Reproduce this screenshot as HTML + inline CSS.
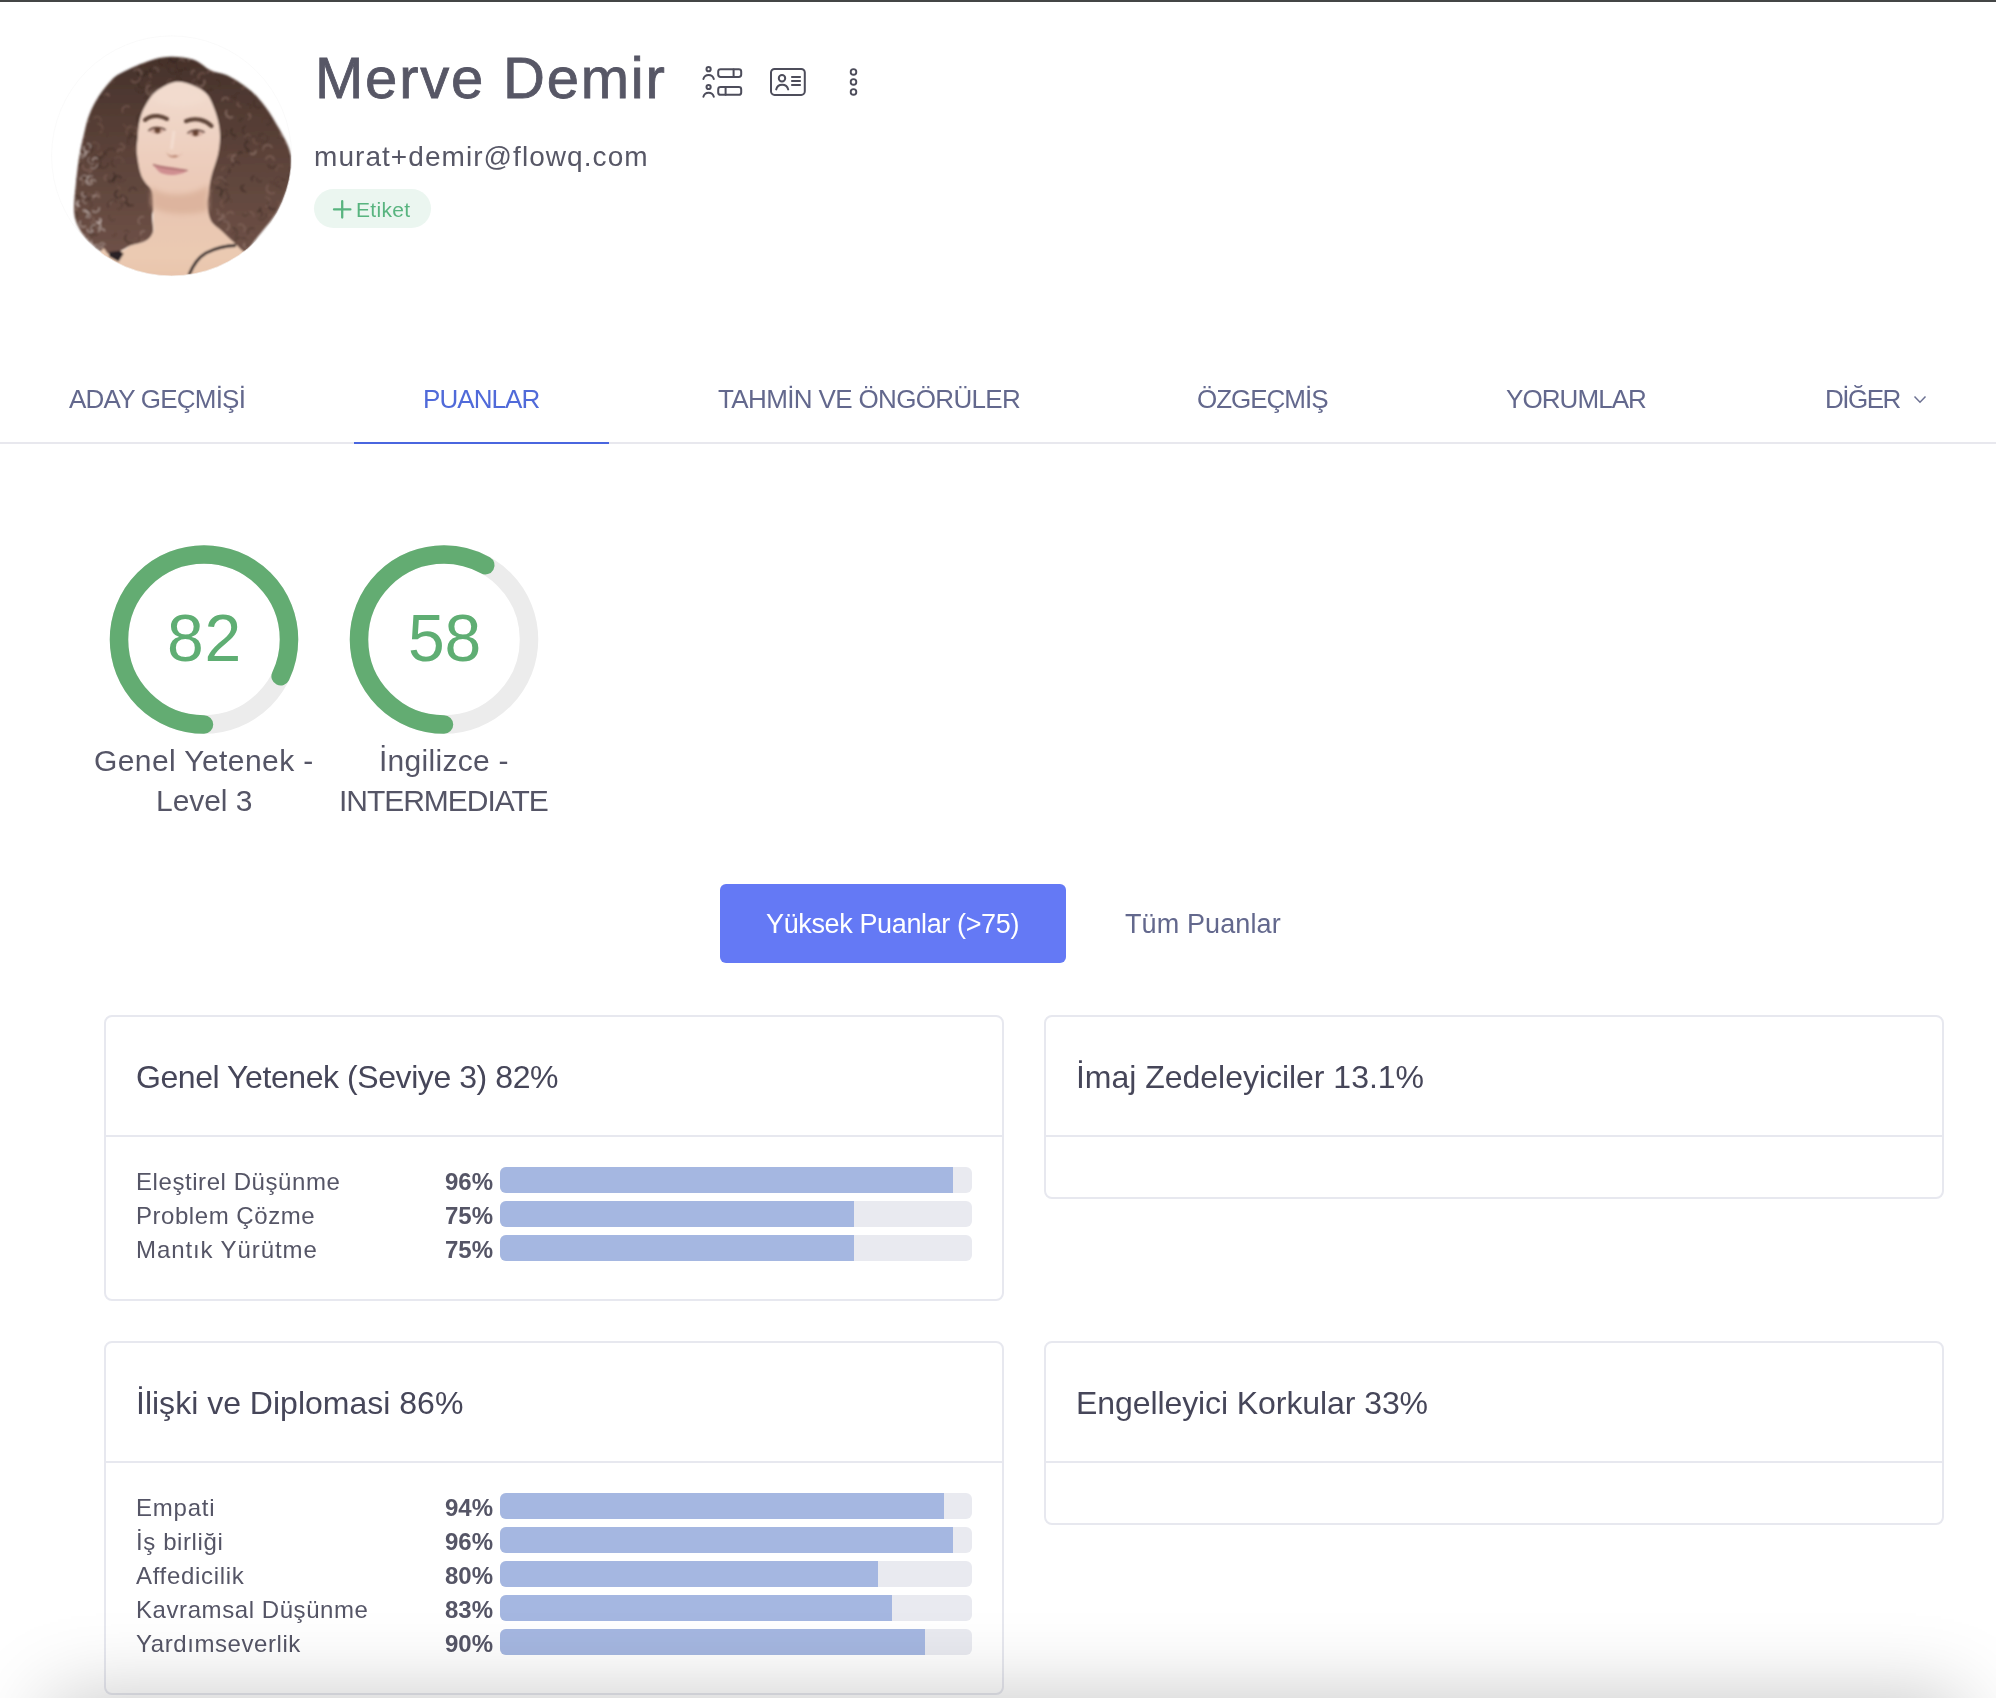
<!DOCTYPE html>
<html><head><meta charset="utf-8">
<style>
html,body{margin:0;padding:0;background:#fff;}
body{width:1996px;height:1698px;position:relative;overflow:hidden;font-family:"Liberation Sans",sans-serif;}
.a{position:absolute;white-space:nowrap;}
.t{line-height:1;will-change:transform;}
.topline{left:0;top:0;width:1996px;height:2px;background:#444646;}
.pill{left:314px;top:189px;width:117px;height:39px;border-radius:20px;background:#ebf6f0;}
.tabline{left:0;top:442px;width:1996px;height:2px;background:#e8e8ee;}
.tabul{left:354px;top:442px;width:255px;height:2px;background:#4a66df;}
.btn{left:720px;top:884px;width:346px;height:79px;border-radius:6px;background:#6479f5;}
.card{border:2px solid #e7e8ef;border-radius:8px;box-sizing:border-box;background:#fff;}
.cdiv{height:2px;background:#e7e8ef;}
.bar{width:472px;height:26px;border-radius:6px;background:#e9eaf0;overflow:hidden;}
.bar i{display:block;height:100%;background:#a5b7e1;}
.shade{left:50px;top:1698px;width:1912px;height:300px;box-shadow:0 0 78px rgba(0,0,0,0.23);background:#fff;}

</style></head><body>
<div class="a topline"></div>
<svg class="a" style="left:50px;top:35px" width="245" height="245" viewBox="0 0 245 245">
  <defs>
    <clipPath id="cc"><circle cx="121.6" cy="120.9" r="120.2"/></clipPath>
    <clipPath id="hairclip"><path d="M110.5 22.8 C121.9 20.7 133.7 22.2 142.0 24.3 C150.3 26.4 154.3 32.5 160.5 35.3 C166.7 38.1 172.2 37.8 179.0 41.2 C185.8 44.7 194.9 50.8 201.0 56.0 C207.1 61.2 211.0 66.0 215.7 72.2 C220.4 78.5 225.3 87.1 229.0 93.5 C232.7 99.9 235.7 105.2 237.8 110.5 C239.9 115.8 241.0 119.8 241.5 125.0 C242.0 130.2 241.7 136.7 240.8 142.0 C239.9 147.3 238.6 150.9 236.3 156.8 C234.0 162.7 231.5 170.0 226.8 177.4 C222.2 184.8 213.9 194.2 208.4 201.0 C202.9 207.8 197.7 216.5 194.0 218.0 C190.3 219.5 189.8 213.5 186.0 210.0 C182.2 206.5 175.8 201.0 171.5 197.0 C167.2 193.0 163.6 189.7 160.0 186.0 C156.4 182.3 155.0 177.7 150.0 175.0 C145.0 172.3 137.7 170.0 130.0 170.0 C122.3 170.0 108.5 170.4 104.0 175.0 C99.5 179.6 104.4 192.1 103.0 197.3 C101.6 202.5 99.4 203.8 95.7 206.0 C92.0 208.2 85.3 208.9 81.0 210.6 C76.7 212.3 73.8 214.6 70.0 216.0 C66.2 217.4 62.0 219.5 58.0 219.0 C54.0 218.5 50.3 216.5 46.0 213.0 C41.7 209.5 35.6 203.7 32.0 198.0 C28.4 192.3 25.3 187.1 24.3 179.0 C23.3 170.9 24.9 159.3 25.8 149.5 C26.7 139.7 28.1 128.3 29.5 120.0 C30.9 111.7 32.4 105.7 33.9 99.4 C35.4 93.2 36.3 88.0 38.3 82.5 C40.3 77.0 42.3 72.1 45.7 66.3 C49.1 60.5 54.2 52.8 58.9 47.9 C63.5 43.0 65.0 41.0 73.6 36.8 C82.2 32.6 99.1 24.9 110.5 22.8 Z"/></clipPath>
    <linearGradient id="hairg" x1="0" y1="0" x2="0" y2="1">
      <stop offset="0" stop-color="#46322b"/>
      <stop offset="0.45" stop-color="#5a4138"/>
      <stop offset="1" stop-color="#6e5147"/>
    </linearGradient>
    <linearGradient id="skin" x1="0" y1="0" x2="0" y2="1">
      <stop offset="0" stop-color="#f2dccf"/>
      <stop offset="0.4" stop-color="#ecccbb"/>
      <stop offset="0.62" stop-color="#e9c7b2"/>
      <stop offset="0.8" stop-color="#ebcab2"/>
      <stop offset="1" stop-color="#e6bfa5"/>
    </linearGradient>
    <radialGradient id="neckshade" cx="0.5" cy="0.3" r="0.6">
      <stop offset="0" stop-color="#c99a82" stop-opacity="0.55"/>
      <stop offset="1" stop-color="#c99a82" stop-opacity="0"/>
    </radialGradient>
    <filter id="blur1" x="-10%" y="-10%" width="120%" height="120%"><feGaussianBlur stdDeviation="0.9"/></filter>
    <filter id="blur2" x="-20%" y="-20%" width="140%" height="140%"><feGaussianBlur stdDeviation="2.5"/></filter>
  </defs>
  <g clip-path="url(#cc)">
    <rect width="245" height="245" fill="#ffffff"/>
    <g filter="url(#blur1)">
      <path fill="url(#hairg)" d="M110.5 22.8 C121.9 20.7 133.7 22.2 142.0 24.3 C150.3 26.4 154.3 32.5 160.5 35.3 C166.7 38.1 172.2 37.8 179.0 41.2 C185.8 44.7 194.9 50.8 201.0 56.0 C207.1 61.2 211.0 66.0 215.7 72.2 C220.4 78.5 225.3 87.1 229.0 93.5 C232.7 99.9 235.7 105.2 237.8 110.5 C239.9 115.8 241.0 119.8 241.5 125.0 C242.0 130.2 241.7 136.7 240.8 142.0 C239.9 147.3 238.6 150.9 236.3 156.8 C234.0 162.7 231.5 170.0 226.8 177.4 C222.2 184.8 213.9 194.2 208.4 201.0 C202.9 207.8 197.7 216.5 194.0 218.0 C190.3 219.5 189.8 213.5 186.0 210.0 C182.2 206.5 175.8 201.0 171.5 197.0 C167.2 193.0 163.6 189.7 160.0 186.0 C156.4 182.3 155.0 177.7 150.0 175.0 C145.0 172.3 137.7 170.0 130.0 170.0 C122.3 170.0 108.5 170.4 104.0 175.0 C99.5 179.6 104.4 192.1 103.0 197.3 C101.6 202.5 99.4 203.8 95.7 206.0 C92.0 208.2 85.3 208.9 81.0 210.6 C76.7 212.3 73.8 214.6 70.0 216.0 C66.2 217.4 62.0 219.5 58.0 219.0 C54.0 218.5 50.3 216.5 46.0 213.0 C41.7 209.5 35.6 203.7 32.0 198.0 C28.4 192.3 25.3 187.1 24.3 179.0 C23.3 170.9 24.9 159.3 25.8 149.5 C26.7 139.7 28.1 128.3 29.5 120.0 C30.9 111.7 32.4 105.7 33.9 99.4 C35.4 93.2 36.3 88.0 38.3 82.5 C40.3 77.0 42.3 72.1 45.7 66.3 C49.1 60.5 54.2 52.8 58.9 47.9 C63.5 43.0 65.0 41.0 73.6 36.8 C82.2 32.6 99.1 24.9 110.5 22.8 Z"/>
      <g clip-path="url(#hairclip)" fill="none"><path d="M123.3 129.3 A4.8 4.8 0 0 1 116.6 136.0" stroke="#8c6d62" stroke-width="1.3" opacity="0.6"/><path d="M65.0 184.3 A3.4 3.4 0 0 1 59.9 179.8" stroke="#553c33" stroke-width="1.6" opacity="0.6"/><path d="M83.7 35.8 A4.4 4.4 0 0 1 90.3 41.7" stroke="#9c8076" stroke-width="1.4" opacity="0.6"/><path d="M112.1 111.9 A4.2 4.2 0 0 1 104.0 110.0" stroke="#9c8076" stroke-width="1.0" opacity="0.6"/><path d="M137.7 29.5 A2.6 2.6 0 0 1 136.2 34.4" stroke="#432f28" stroke-width="1.4" opacity="0.6"/><path d="M89.9 139.4 A2.6 2.6 0 0 1 94.9 140.0" stroke="#432f28" stroke-width="1.4" opacity="0.6"/><path d="M168.6 110.0 A2.8 2.8 0 0 1 165.0 114.3" stroke="#553c33" stroke-width="1.8" opacity="0.6"/><path d="M174.7 82.7 A2.7 2.7 0 0 1 179.3 85.3" stroke="#7d5e52" stroke-width="0.8" opacity="0.6"/><path d="M45.6 39.4 A2.9 2.9 0 0 1 41.8 43.6" stroke="#3a2822" stroke-width="1.8" opacity="0.6"/><path d="M18.9 57.8 A4.7 4.7 0 0 1 20.1 67.1" stroke="#8c6d62" stroke-width="1.2" opacity="0.6"/><path d="M115.4 135.7 A2.6 2.6 0 0 1 111.4 132.5" stroke="#9c8076" stroke-width="1.1" opacity="0.6"/><path d="M92.7 210.6 A4.3 4.3 0 0 1 93.9 219.0" stroke="#3a2822" stroke-width="0.9" opacity="0.6"/><path d="M19.2 115.0 A3.5 3.5 0 0 1 25.9 113.7" stroke="#9c8076" stroke-width="1.4" opacity="0.6"/><path d="M60.4 169.3 A2.4 2.4 0 0 1 64.5 166.9" stroke="#9c8076" stroke-width="1.2" opacity="0.6"/><path d="M244.4 20.0 A4.6 4.6 0 0 1 235.3 19.0" stroke="#2f211d" stroke-width="1.4" opacity="0.6"/><path d="M28.4 60.8 A5.0 5.0 0 0 1 21.2 54.0" stroke="#553c33" stroke-width="1.4" opacity="0.6"/><path d="M241.0 60.6 A2.8 2.8 0 0 1 237.7 65.1" stroke="#2f211d" stroke-width="1.4" opacity="0.6"/><path d="M103.6 33.4 A2.6 2.6 0 0 1 107.4 37.1" stroke="#9c8076" stroke-width="1.0" opacity="0.6"/><path d="M105.7 115.2 A4.9 4.9 0 0 1 100.4 107.2" stroke="#8c6d62" stroke-width="1.6" opacity="0.6"/><path d="M105.7 149.6 A2.9 2.9 0 0 1 106.5 143.9" stroke="#432f28" stroke-width="1.6" opacity="0.6"/><path d="M58.5 172.5 A4.8 4.8 0 0 1 66.5 167.3" stroke="#432f28" stroke-width="1.5" opacity="0.6"/><path d="M129.2 35.4 A2.1 2.1 0 0 1 125.0 35.8" stroke="#3a2822" stroke-width="0.8" opacity="0.6"/><path d="M70.2 162.5 A2.8 2.8 0 0 1 75.6 162.9" stroke="#2f211d" stroke-width="1.7" opacity="0.6"/><path d="M130.9 205.9 A4.9 4.9 0 0 1 139.4 210.6" stroke="#432f28" stroke-width="1.0" opacity="0.6"/><path d="M211.8 145.3 A2.8 2.8 0 0 1 207.0 142.3" stroke="#432f28" stroke-width="1.5" opacity="0.6"/><path d="M109.4 69.4 A2.1 2.1 0 0 1 113.0 71.7" stroke="#7d5e52" stroke-width="1.2" opacity="0.6"/><path d="M47.5 88.8 A4.7 4.7 0 0 1 49.7 97.8" stroke="#7d5e52" stroke-width="1.5" opacity="0.6"/><path d="M148.4 50.0 A2.1 2.1 0 0 1 151.4 47.1" stroke="#3a2822" stroke-width="1.3" opacity="0.6"/><path d="M88.7 23.0 A3.8 3.8 0 0 1 88.7 30.5" stroke="#3a2822" stroke-width="1.3" opacity="0.6"/><path d="M92.9 222.5 A2.2 2.2 0 0 1 88.9 220.7" stroke="#553c33" stroke-width="1.2" opacity="0.6"/><path d="M226.9 166.7 A2.4 2.4 0 0 1 228.2 171.3" stroke="#7d5e52" stroke-width="1.2" opacity="0.6"/><path d="M216.7 196.0 A3.3 3.3 0 0 1 223.1 196.8" stroke="#2f211d" stroke-width="0.8" opacity="0.6"/><path d="M26.0 155.3 A3.1 3.1 0 0 1 21.0 151.6" stroke="#3a2822" stroke-width="1.4" opacity="0.6"/><path d="M166.2 218.8 A4.6 4.6 0 0 1 157.4 221.4" stroke="#9c8076" stroke-width="1.1" opacity="0.6"/><path d="M174.1 109.1 A3.4 3.4 0 0 1 173.2 115.7" stroke="#553c33" stroke-width="0.9" opacity="0.6"/><path d="M29.2 143.7 A3.4 3.4 0 0 1 24.7 138.6" stroke="#432f28" stroke-width="1.8" opacity="0.6"/><path d="M195.3 156.1 A3.5 3.5 0 0 1 191.8 150.2" stroke="#3a2822" stroke-width="1.2" opacity="0.6"/><path d="M151.8 126.2 A4.3 4.3 0 0 1 160.0 124.3" stroke="#7d5e52" stroke-width="1.5" opacity="0.6"/><path d="M219.3 82.3 A4.0 4.0 0 0 1 215.7 89.4" stroke="#432f28" stroke-width="1.4" opacity="0.6"/><path d="M186.5 62.9 A2.6 2.6 0 0 1 189.2 58.4" stroke="#432f28" stroke-width="1.4" opacity="0.6"/><path d="M54.4 122.1 A4.5 4.5 0 0 1 46.7 117.5" stroke="#2f211d" stroke-width="0.8" opacity="0.6"/><path d="M238.2 188.3 A2.3 2.3 0 0 1 237.7 183.7" stroke="#8c6d62" stroke-width="1.1" opacity="0.6"/><path d="M113.8 143.5 A3.5 3.5 0 0 1 109.3 148.7" stroke="#7d5e52" stroke-width="1.5" opacity="0.6"/><path d="M163.0 85.9 A4.5 4.5 0 0 1 154.8 82.5" stroke="#7d5e52" stroke-width="1.7" opacity="0.6"/><path d="M175.5 133.0 A2.9 2.9 0 0 1 178.5 137.9" stroke="#2f211d" stroke-width="1.4" opacity="0.6"/><path d="M112.7 61.7 A4.3 4.3 0 0 1 108.2 54.4" stroke="#7d5e52" stroke-width="1.0" opacity="0.6"/><path d="M28.3 144.5 A3.3 3.3 0 0 1 31.8 150.1" stroke="#9c8076" stroke-width="1.3" opacity="0.6"/><path d="M103.0 38.1 A2.6 2.6 0 0 1 101.4 33.2" stroke="#2f211d" stroke-width="1.3" opacity="0.6"/><path d="M23.1 111.3 A4.1 4.1 0 0 1 20.6 119.1" stroke="#432f28" stroke-width="1.0" opacity="0.6"/><path d="M141.8 208.4 A3.5 3.5 0 0 1 137.1 213.5" stroke="#2f211d" stroke-width="1.0" opacity="0.6"/><path d="M172.3 66.2 A3.2 3.2 0 0 1 178.6 65.1" stroke="#9c8076" stroke-width="1.2" opacity="0.6"/><path d="M65.2 197.8 A2.0 2.0 0 0 1 61.9 200.2" stroke="#553c33" stroke-width="1.4" opacity="0.6"/><path d="M199.6 212.7 A3.4 3.4 0 0 1 194.7 208.1" stroke="#9c8076" stroke-width="1.8" opacity="0.6"/><path d="M216.1 178.4 A4.8 4.8 0 0 1 207.8 183.0" stroke="#3a2822" stroke-width="1.0" opacity="0.6"/><path d="M237.4 221.0 A3.6 3.6 0 0 1 238.8 214.0" stroke="#2f211d" stroke-width="1.7" opacity="0.6"/><path d="M176.1 22.1 A3.5 3.5 0 0 1 182.4 25.1" stroke="#3a2822" stroke-width="1.2" opacity="0.6"/><path d="M188.7 119.4 A2.1 2.1 0 0 1 192.6 118.1" stroke="#2f211d" stroke-width="1.7" opacity="0.6"/><path d="M31.9 127.7 A4.1 4.1 0 0 1 23.9 126.7" stroke="#432f28" stroke-width="1.3" opacity="0.6"/><path d="M215.9 124.9 A4.0 4.0 0 0 1 223.9 125.5" stroke="#8c6d62" stroke-width="1.7" opacity="0.6"/><path d="M232.0 35.0 A2.7 2.7 0 0 1 228.9 39.3" stroke="#553c33" stroke-width="1.4" opacity="0.6"/><path d="M143.0 50.1 A3.5 3.5 0 0 1 145.5 56.6" stroke="#553c33" stroke-width="1.1" opacity="0.6"/><path d="M235.7 195.0 A3.8 3.8 0 0 1 228.1 195.5" stroke="#7d5e52" stroke-width="1.7" opacity="0.6"/><path d="M139.0 135.8 A2.6 2.6 0 0 1 133.9 135.0" stroke="#553c33" stroke-width="0.9" opacity="0.6"/><path d="M105.8 128.6 A2.1 2.1 0 0 1 101.6 128.3" stroke="#8c6d62" stroke-width="1.3" opacity="0.6"/><path d="M49.3 37.6 A2.5 2.5 0 0 1 44.6 39.4" stroke="#553c33" stroke-width="1.3" opacity="0.6"/><path d="M195.2 102.8 A2.7 2.7 0 0 1 200.4 101.2" stroke="#8c6d62" stroke-width="0.9" opacity="0.6"/><path d="M198.1 203.6 A3.4 3.4 0 0 1 204.4 201.1" stroke="#7d5e52" stroke-width="0.9" opacity="0.6"/><path d="M28.8 76.0 A4.1 4.1 0 0 1 25.2 68.7" stroke="#3a2822" stroke-width="0.8" opacity="0.6"/><path d="M25.9 79.9 A4.2 4.2 0 0 1 20.1 74.1" stroke="#432f28" stroke-width="1.4" opacity="0.6"/><path d="M181.2 41.4 A3.5 3.5 0 0 1 182.4 48.3" stroke="#7d5e52" stroke-width="1.5" opacity="0.6"/><path d="M217.2 28.0 A3.9 3.9 0 0 1 213.9 21.0" stroke="#2f211d" stroke-width="1.3" opacity="0.6"/><path d="M61.6 146.5 A3.9 3.9 0 0 1 68.7 149.5" stroke="#553c33" stroke-width="1.0" opacity="0.6"/><path d="M154.1 44.8 A4.7 4.7 0 0 1 145.8 49.2" stroke="#9c8076" stroke-width="1.6" opacity="0.6"/><path d="M91.8 88.1 A4.8 4.8 0 0 1 89.7 78.9" stroke="#432f28" stroke-width="1.6" opacity="0.6"/><path d="M43.5 200.9 A2.4 2.4 0 0 1 40.0 197.7" stroke="#3a2822" stroke-width="1.1" opacity="0.6"/><path d="M201.7 102.0 A4.4 4.4 0 0 1 206.9 109.0" stroke="#432f28" stroke-width="1.0" opacity="0.6"/><path d="M201.0 38.7 A3.7 3.7 0 0 1 193.6 39.2" stroke="#7d5e52" stroke-width="1.7" opacity="0.6"/><path d="M47.7 118.4 A4.3 4.3 0 0 1 42.6 125.2" stroke="#553c33" stroke-width="1.8" opacity="0.6"/><path d="M196.2 117.2 A2.1 2.1 0 0 1 200.2 118.1" stroke="#2f211d" stroke-width="1.4" opacity="0.6"/><path d="M147.7 51.7 A2.6 2.6 0 0 1 145.5 47.2" stroke="#432f28" stroke-width="1.0" opacity="0.6"/><path d="M79.2 156.8 A3.7 3.7 0 0 1 86.6 156.0" stroke="#432f28" stroke-width="1.8" opacity="0.6"/><path d="M190.6 89.3 A3.4 3.4 0 0 1 189.8 82.6" stroke="#553c33" stroke-width="1.2" opacity="0.6"/><path d="M100.8 148.7 A2.1 2.1 0 0 1 105.0 148.0" stroke="#432f28" stroke-width="1.0" opacity="0.6"/><path d="M184.8 99.4 A2.6 2.6 0 0 1 182.8 104.1" stroke="#432f28" stroke-width="0.9" opacity="0.6"/><path d="M96.1 35.4 A4.5 4.5 0 0 1 87.4 37.7" stroke="#2f211d" stroke-width="1.7" opacity="0.6"/><path d="M146.3 62.3 A3.8 3.8 0 0 1 147.6 55.0" stroke="#7d5e52" stroke-width="1.6" opacity="0.6"/><path d="M225.2 173.6 A4.3 4.3 0 0 1 220.3 166.5" stroke="#2f211d" stroke-width="1.7" opacity="0.6"/><path d="M90.7 130.6 A3.1 3.1 0 0 1 96.2 127.8" stroke="#8c6d62" stroke-width="1.6" opacity="0.6"/><path d="M182.7 32.3 A3.0 3.0 0 0 1 177.7 35.6" stroke="#8c6d62" stroke-width="0.9" opacity="0.6"/><path d="M238.8 200.5 A2.1 2.1 0 0 1 240.5 204.4" stroke="#7d5e52" stroke-width="1.7" opacity="0.6"/><path d="M91.3 152.9 A3.7 3.7 0 0 1 98.5 154.5" stroke="#553c33" stroke-width="0.9" opacity="0.6"/><path d="M132.8 63.4 A2.4 2.4 0 0 1 128.3 62.1" stroke="#8c6d62" stroke-width="1.8" opacity="0.6"/><path d="M156.8 166.5 A2.8 2.8 0 0 1 155.7 171.9" stroke="#8c6d62" stroke-width="1.3" opacity="0.6"/><path d="M161.2 21.3 A2.8 2.8 0 0 1 166.2 23.7" stroke="#7d5e52" stroke-width="1.7" opacity="0.6"/><path d="M134.1 211.9 A3.7 3.7 0 0 1 130.6 218.4" stroke="#3a2822" stroke-width="1.4" opacity="0.6"/><path d="M40.9 139.1 A4.3 4.3 0 0 1 32.7 141.3" stroke="#3a2822" stroke-width="1.2" opacity="0.6"/><path d="M109.9 217.6 A4.6 4.6 0 0 1 102.0 213.3" stroke="#553c33" stroke-width="1.4" opacity="0.6"/><path d="M226.3 104.3 A3.6 3.6 0 0 1 233.1 106.5" stroke="#553c33" stroke-width="1.1" opacity="0.6"/><path d="M125.9 79.1 A4.8 4.8 0 0 1 129.8 70.4" stroke="#9c8076" stroke-width="1.5" opacity="0.6"/><path d="M22.3 67.5 A2.1 2.1 0 0 1 23.4 71.6" stroke="#432f28" stroke-width="1.2" opacity="0.6"/><path d="M34.7 82.6 A3.2 3.2 0 0 1 28.5 84.0" stroke="#553c33" stroke-width="1.8" opacity="0.6"/><path d="M36.4 199.6 A3.3 3.3 0 0 1 35.4 206.1" stroke="#8c6d62" stroke-width="1.1" opacity="0.6"/><path d="M34.4 38.8 A4.4 4.4 0 0 1 25.7 39.9" stroke="#8c6d62" stroke-width="0.9" opacity="0.6"/><path d="M75.0 164.8 A2.2 2.2 0 0 1 74.4 160.5" stroke="#8c6d62" stroke-width="1.3" opacity="0.6"/><path d="M29.5 127.9 A2.4 2.4 0 0 1 33.8 126.1" stroke="#8c6d62" stroke-width="0.9" opacity="0.6"/><path d="M149.5 148.4 A4.0 4.0 0 0 1 157.1 151.0" stroke="#7d5e52" stroke-width="1.6" opacity="0.6"/><path d="M237.3 212.4 A4.2 4.2 0 0 1 245.5 213.6" stroke="#432f28" stroke-width="1.3" opacity="0.6"/><path d="M86.7 118.3 A4.5 4.5 0 0 1 89.2 127.0" stroke="#7d5e52" stroke-width="1.1" opacity="0.6"/><path d="M149.1 138.3 A3.9 3.9 0 0 1 141.5 139.7" stroke="#2f211d" stroke-width="1.0" opacity="0.6"/><path d="M133.9 152.9 A2.6 2.6 0 0 1 129.4 150.3" stroke="#9c8076" stroke-width="0.8" opacity="0.6"/><path d="M79.5 109.7 A3.9 3.9 0 0 1 81.8 102.4" stroke="#3a2822" stroke-width="1.0" opacity="0.6"/><path d="M186.1 206.2 A2.5 2.5 0 0 1 189.9 203.1" stroke="#432f28" stroke-width="1.4" opacity="0.6"/><path d="M128.3 60.3 A3.0 3.0 0 0 1 123.7 64.2" stroke="#9c8076" stroke-width="0.9" opacity="0.6"/><path d="M199.1 114.7 A4.5 4.5 0 0 1 198.2 105.9" stroke="#2f211d" stroke-width="1.6" opacity="0.6"/><path d="M116.5 68.3 A4.4 4.4 0 0 1 111.0 75.2" stroke="#7d5e52" stroke-width="1.0" opacity="0.6"/><path d="M148.6 80.6 A4.3 4.3 0 0 1 156.7 77.9" stroke="#2f211d" stroke-width="1.7" opacity="0.6"/><path d="M97.8 41.5 A4.6 4.6 0 0 1 106.5 38.8" stroke="#3a2822" stroke-width="1.3" opacity="0.6"/><path d="M149.1 186.2 A3.4 3.4 0 0 1 143.6 182.4" stroke="#2f211d" stroke-width="1.6" opacity="0.6"/><path d="M67.5 151.5 A2.2 2.2 0 0 1 66.6 155.9" stroke="#7d5e52" stroke-width="1.3" opacity="0.6"/><path d="M91.0 200.1 A2.7 2.7 0 0 1 95.0 196.6" stroke="#9c8076" stroke-width="1.5" opacity="0.6"/><path d="M42.6 164.7 A3.7 3.7 0 0 1 49.7 162.8" stroke="#9c8076" stroke-width="1.7" opacity="0.6"/><path d="M197.9 78.6 A3.0 3.0 0 0 1 197.9 84.5" stroke="#8c6d62" stroke-width="1.8" opacity="0.6"/><path d="M131.0 39.8 A4.5 4.5 0 0 1 138.7 35.3" stroke="#3a2822" stroke-width="1.2" opacity="0.6"/><path d="M108.1 62.4 A3.7 3.7 0 0 1 104.8 55.9" stroke="#2f211d" stroke-width="1.2" opacity="0.6"/><path d="M150.8 58.0 A2.3 2.3 0 0 1 152.2 53.8" stroke="#8c6d62" stroke-width="1.7" opacity="0.6"/><path d="M28.5 124.7 A3.6 3.6 0 0 1 21.6 122.7" stroke="#553c33" stroke-width="1.1" opacity="0.6"/><path d="M210.1 107.3 A3.7 3.7 0 0 1 204.2 102.7" stroke="#7d5e52" stroke-width="1.6" opacity="0.6"/><path d="M35.4 165.0 A4.7 4.7 0 0 1 39.7 173.3" stroke="#3a2822" stroke-width="0.8" opacity="0.6"/><path d="M41.9 181.6 A3.3 3.3 0 0 1 40.5 187.9" stroke="#9c8076" stroke-width="1.0" opacity="0.6"/><path d="M134.2 177.2 A3.2 3.2 0 0 1 138.0 172.2" stroke="#7d5e52" stroke-width="1.6" opacity="0.6"/><path d="M54.1 116.3 A4.4 4.4 0 0 1 46.1 119.8" stroke="#3a2822" stroke-width="1.5" opacity="0.6"/><path d="M108.3 189.7 A4.0 4.0 0 0 1 114.6 184.9" stroke="#2f211d" stroke-width="0.8" opacity="0.6"/><path d="M38.9 110.4 A3.6 3.6 0 0 1 39.8 117.5" stroke="#3a2822" stroke-width="1.3" opacity="0.6"/><path d="M199.8 107.9 A3.3 3.3 0 0 1 197.2 102.0" stroke="#432f28" stroke-width="1.0" opacity="0.6"/><path d="M160.2 161.0 A3.0 3.0 0 0 1 162.5 155.6" stroke="#8c6d62" stroke-width="1.2" opacity="0.6"/><path d="M236.9 34.4 A2.9 2.9 0 0 1 234.3 29.2" stroke="#3a2822" stroke-width="1.1" opacity="0.6"/><path d="M227.8 202.0 A4.3 4.3 0 0 1 220.1 205.6" stroke="#3a2822" stroke-width="1.4" opacity="0.6"/><path d="M26.0 40.5 A2.6 2.6 0 0 1 29.7 43.9" stroke="#432f28" stroke-width="1.4" opacity="0.6"/><path d="M127.6 121.0 A3.3 3.3 0 0 1 121.6 123.7" stroke="#7d5e52" stroke-width="1.2" opacity="0.6"/><path d="M227.8 151.4 A4.8 4.8 0 0 1 229.6 142.0" stroke="#553c33" stroke-width="1.3" opacity="0.6"/><path d="M219.5 206.3 A3.0 3.0 0 0 1 215.0 202.4" stroke="#553c33" stroke-width="1.6" opacity="0.6"/><path d="M209.5 102.4 A2.7 2.7 0 0 1 213.9 99.5" stroke="#432f28" stroke-width="1.6" opacity="0.6"/><path d="M137.3 127.0 A2.8 2.8 0 0 1 137.6 121.4" stroke="#3a2822" stroke-width="1.5" opacity="0.6"/><path d="M19.7 117.0 A3.1 3.1 0 0 1 25.4 114.7" stroke="#2f211d" stroke-width="1.0" opacity="0.6"/><path d="M217.1 100.8 A4.3 4.3 0 0 1 210.6 106.3" stroke="#432f28" stroke-width="1.1" opacity="0.6"/><path d="M139.3 150.3 A5.0 5.0 0 0 1 130.4 145.9" stroke="#7d5e52" stroke-width="1.3" opacity="0.6"/><path d="M148.8 57.9 A2.6 2.6 0 0 1 145.7 53.7" stroke="#2f211d" stroke-width="0.9" opacity="0.6"/><path d="M101.2 146.0 A3.6 3.6 0 0 1 95.5 141.7" stroke="#8c6d62" stroke-width="1.5" opacity="0.6"/><path d="M183.1 131.5 A3.5 3.5 0 0 1 189.6 128.8" stroke="#3a2822" stroke-width="1.6" opacity="0.6"/><path d="M219.7 40.7 A4.5 4.5 0 0 1 227.8 37.1" stroke="#432f28" stroke-width="0.8" opacity="0.6"/><path d="M134.1 213.5 A4.9 4.9 0 0 1 126.1 207.9" stroke="#7d5e52" stroke-width="1.1" opacity="0.6"/><path d="M90.5 117.6 A4.1 4.1 0 0 1 86.1 110.6" stroke="#7d5e52" stroke-width="0.9" opacity="0.6"/><path d="M165.8 153.0 A4.2 4.2 0 0 1 169.7 160.5" stroke="#2f211d" stroke-width="1.6" opacity="0.6"/><path d="M25.9 98.9 A4.1 4.1 0 0 1 20.4 92.8" stroke="#432f28" stroke-width="1.1" opacity="0.6"/><path d="M188.0 189.9 A4.5 4.5 0 0 1 193.8 196.7" stroke="#9c8076" stroke-width="1.0" opacity="0.6"/><path d="M84.6 92.3 A3.6 3.6 0 0 1 83.4 99.4" stroke="#7d5e52" stroke-width="1.8" opacity="0.6"/><path d="M142.1 39.8 A2.6 2.6 0 0 1 145.1 35.7" stroke="#8c6d62" stroke-width="1.5" opacity="0.6"/><path d="M226.7 136.5 A4.2 4.2 0 0 1 233.5 131.8" stroke="#7d5e52" stroke-width="1.2" opacity="0.6"/><path d="M43.6 147.8 A2.4 2.4 0 0 1 42.2 143.2" stroke="#9c8076" stroke-width="1.5" opacity="0.6"/><path d="M113.0 189.8 A3.8 3.8 0 0 1 105.9 187.4" stroke="#3a2822" stroke-width="0.9" opacity="0.6"/><path d="M235.3 109.5 A4.3 4.3 0 0 1 243.4 106.8" stroke="#7d5e52" stroke-width="1.7" opacity="0.6"/><path d="M129.3 151.2 A4.3 4.3 0 0 1 137.8 151.4" stroke="#2f211d" stroke-width="1.5" opacity="0.6"/><path d="M228.7 145.4 A4.2 4.2 0 0 1 220.4 145.3" stroke="#553c33" stroke-width="1.5" opacity="0.6"/><path d="M196.7 156.9 A3.8 3.8 0 0 1 194.8 149.6" stroke="#3a2822" stroke-width="1.1" opacity="0.6"/><path d="M89.0 105.6 A3.7 3.7 0 0 1 86.4 112.4" stroke="#432f28" stroke-width="1.3" opacity="0.6"/><path d="M202.5 145.9 A2.5 2.5 0 0 1 204.5 141.4" stroke="#2f211d" stroke-width="1.3" opacity="0.6"/><path d="M75.5 143.3 A3.5 3.5 0 0 1 68.4 143.0" stroke="#553c33" stroke-width="1.5" opacity="0.6"/><path d="M139.0 165.3 A4.5 4.5 0 0 1 130.5 162.6" stroke="#432f28" stroke-width="1.4" opacity="0.6"/><path d="M165.6 174.6 A2.4 2.4 0 0 1 166.6 179.3" stroke="#8c6d62" stroke-width="1.4" opacity="0.6"/><path d="M90.1 208.6 A3.1 3.1 0 0 1 96.2 207.5" stroke="#8c6d62" stroke-width="1.7" opacity="0.6"/><path d="M178.6 66.8 A3.7 3.7 0 0 1 185.0 70.4" stroke="#553c33" stroke-width="1.4" opacity="0.6"/><path d="M81.7 207.6 A5.0 5.0 0 0 1 76.8 199.1" stroke="#2f211d" stroke-width="1.1" opacity="0.6"/><path d="M223.7 19.0 A4.1 4.1 0 0 1 230.4 23.4" stroke="#7d5e52" stroke-width="1.0" opacity="0.6"/><path d="M201.4 59.6 A3.6 3.6 0 0 1 207.9 56.2" stroke="#3a2822" stroke-width="1.3" opacity="0.6"/><path d="M191.4 203.4 A5.0 5.0 0 0 1 194.9 212.7" stroke="#432f28" stroke-width="1.1" opacity="0.6"/><path d="M185.8 100.3 A3.8 3.8 0 0 1 182.6 93.5" stroke="#2f211d" stroke-width="1.6" opacity="0.6"/><path d="M113.1 29.9 A3.6 3.6 0 0 1 110.7 23.2" stroke="#3a2822" stroke-width="1.4" opacity="0.6"/><path d="M136.2 69.6 A3.7 3.7 0 0 1 133.7 76.6" stroke="#7d5e52" stroke-width="0.9" opacity="0.6"/><path d="M177.1 179.7 A3.2 3.2 0 0 1 183.4 179.3" stroke="#8c6d62" stroke-width="1.4" opacity="0.6"/><path d="M110.5 150.0 A4.1 4.1 0 0 1 113.1 142.4" stroke="#2f211d" stroke-width="1.2" opacity="0.6"/><path d="M213.1 115.5 A4.7 4.7 0 0 1 222.1 112.9" stroke="#9c8076" stroke-width="1.2" opacity="0.6"/><path d="M142.5 204.6 A3.6 3.6 0 0 1 149.1 202.0" stroke="#553c33" stroke-width="1.3" opacity="0.6"/><path d="M25.0 200.4 A2.9 2.9 0 0 1 25.0 206.1" stroke="#553c33" stroke-width="1.7" opacity="0.6"/><path d="M152.8 174.8 A2.9 2.9 0 0 1 153.3 169.0" stroke="#553c33" stroke-width="1.7" opacity="0.6"/><path d="M211.1 71.8 A4.6 4.6 0 0 1 204.7 65.3" stroke="#3a2822" stroke-width="1.3" opacity="0.6"/><path d="M226.0 130.1 A4.0 4.0 0 0 1 218.2 129.1" stroke="#432f28" stroke-width="1.7" opacity="0.6"/><path d="M183.3 193.1 A3.1 3.1 0 0 1 180.5 198.6" stroke="#553c33" stroke-width="1.2" opacity="0.6"/><path d="M70.2 167.2 A3.7 3.7 0 0 1 67.4 174.0" stroke="#3a2822" stroke-width="0.9" opacity="0.6"/><path d="M46.8 123.8 A4.9 4.9 0 0 1 46.9 133.4" stroke="#3a2822" stroke-width="1.1" opacity="0.6"/><path d="M22.7 56.7 A3.3 3.3 0 0 1 28.4 53.5" stroke="#8c6d62" stroke-width="1.6" opacity="0.6"/><path d="M98.3 140.2 A2.1 2.1 0 0 1 100.5 136.6" stroke="#3a2822" stroke-width="1.3" opacity="0.6"/><path d="M93.2 53.1 A4.3 4.3 0 0 1 91.9 44.6" stroke="#2f211d" stroke-width="1.3" opacity="0.6"/><path d="M88.5 202.7 A4.7 4.7 0 0 1 81.8 209.1" stroke="#432f28" stroke-width="1.1" opacity="0.6"/><path d="M220.8 27.0 A3.9 3.9 0 0 1 219.5 19.3" stroke="#9c8076" stroke-width="1.8" opacity="0.6"/><path d="M158.8 63.0 A4.6 4.6 0 0 1 163.0 54.9" stroke="#3a2822" stroke-width="1.5" opacity="0.6"/><path d="M203.4 216.3 A2.8 2.8 0 0 1 200.3 211.7" stroke="#8c6d62" stroke-width="1.5" opacity="0.6"/><path d="M176.6 206.9 A3.3 3.3 0 0 1 171.8 211.4" stroke="#3a2822" stroke-width="1.0" opacity="0.6"/><path d="M45.3 157.2 A2.8 2.8 0 0 1 47.6 162.3" stroke="#9c8076" stroke-width="1.0" opacity="0.6"/><path d="M196.0 99.2 A4.0 4.0 0 0 1 196.0 91.3" stroke="#3a2822" stroke-width="1.4" opacity="0.6"/><path d="M84.8 203.7 A4.0 4.0 0 0 1 87.8 211.1" stroke="#7d5e52" stroke-width="0.9" opacity="0.6"/><path d="M127.3 36.7 A4.8 4.8 0 0 1 118.7 32.9" stroke="#3a2822" stroke-width="1.3" opacity="0.6"/><path d="M154.5 79.8 A2.8 2.8 0 0 1 152.4 74.8" stroke="#2f211d" stroke-width="1.4" opacity="0.6"/><path d="M240.4 60.6 A2.5 2.5 0 0 1 239.1 55.8" stroke="#9c8076" stroke-width="1.3" opacity="0.6"/><path d="M217.3 218.5 A2.1 2.1 0 0 1 220.6 221.0" stroke="#8c6d62" stroke-width="1.7" opacity="0.6"/><path d="M19.2 198.4 A2.2 2.2 0 0 1 21.4 202.1" stroke="#3a2822" stroke-width="1.4" opacity="0.6"/><path d="M101.9 149.1 A4.3 4.3 0 0 1 96.9 156.2" stroke="#553c33" stroke-width="1.1" opacity="0.6"/><path d="M161.7 214.5 A4.2 4.2 0 0 1 159.1 222.5" stroke="#553c33" stroke-width="1.0" opacity="0.6"/><path d="M56.6 145.5 A2.7 2.7 0 0 1 57.5 140.2" stroke="#8c6d62" stroke-width="1.3" opacity="0.6"/><path d="M176.5 164.4 A2.8 2.8 0 0 1 181.0 167.7" stroke="#553c33" stroke-width="1.0" opacity="0.6"/><path d="M127.2 28.4 A3.8 3.8 0 0 1 134.6 26.9" stroke="#9c8076" stroke-width="0.9" opacity="0.6"/><path d="M212.0 87.2 A3.8 3.8 0 0 1 219.3 85.1" stroke="#553c33" stroke-width="1.3" opacity="0.6"/><path d="M120.0 77.1 A4.4 4.4 0 0 1 117.2 68.8" stroke="#3a2822" stroke-width="0.9" opacity="0.6"/><path d="M160.5 140.9 A4.2 4.2 0 0 1 164.5 133.7" stroke="#553c33" stroke-width="0.9" opacity="0.6"/><path d="M29.8 79.7 A3.9 3.9 0 0 1 28.1 87.1" stroke="#553c33" stroke-width="1.6" opacity="0.6"/><path d="M132.5 154.3 A3.5 3.5 0 0 1 129.6 147.9" stroke="#8c6d62" stroke-width="1.1" opacity="0.6"/><path d="M169.1 188.8 A4.4 4.4 0 0 1 177.7 188.1" stroke="#3a2822" stroke-width="1.1" opacity="0.6"/><path d="M175.4 157.3 A4.9 4.9 0 0 1 173.5 166.8" stroke="#432f28" stroke-width="1.3" opacity="0.6"/><path d="M242.3 49.3 A3.4 3.4 0 0 1 235.7 48.3" stroke="#9c8076" stroke-width="1.8" opacity="0.6"/><path d="M109.0 127.2 A2.3 2.3 0 0 1 113.2 125.7" stroke="#553c33" stroke-width="1.1" opacity="0.6"/><path d="M33.2 23.7 A5.0 5.0 0 0 1 39.8 31.0" stroke="#2f211d" stroke-width="1.8" opacity="0.6"/><path d="M89.8 42.1 A4.6 4.6 0 0 1 81.1 44.8" stroke="#8c6d62" stroke-width="1.3" opacity="0.6"/><path d="M103.4 92.3 A4.9 4.9 0 0 1 99.3 83.4" stroke="#553c33" stroke-width="1.0" opacity="0.6"/><path d="M152.7 217.8 A4.2 4.2 0 0 1 146.4 223.3" stroke="#553c33" stroke-width="1.5" opacity="0.6"/><path d="M151.9 202.3 A3.4 3.4 0 0 1 151.2 195.7" stroke="#8c6d62" stroke-width="1.7" opacity="0.6"/><path d="M101.0 29.0 A3.3 3.3 0 0 1 106.8 31.7" stroke="#432f28" stroke-width="1.0" opacity="0.6"/><path d="M53.8 61.6 A2.6 2.6 0 0 1 59.0 61.4" stroke="#8c6d62" stroke-width="1.6" opacity="0.6"/><path d="M126.9 148.3 A2.5 2.5 0 0 1 131.1 145.4" stroke="#8c6d62" stroke-width="1.0" opacity="0.6"/><path d="M33.1 159.3 A3.1 3.1 0 0 1 39.0 160.8" stroke="#7d5e52" stroke-width="1.4" opacity="0.6"/><path d="M184.2 127.1 A3.7 3.7 0 0 1 186.0 120.0" stroke="#9c8076" stroke-width="1.5" opacity="0.6"/><path d="M100.4 55.8 A4.8 4.8 0 0 1 101.1 46.3" stroke="#7d5e52" stroke-width="0.9" opacity="0.6"/><path d="M210.7 46.6 A5.0 5.0 0 0 1 202.8 40.6" stroke="#2f211d" stroke-width="1.2" opacity="0.6"/><path d="M214.5 89.8 A4.3 4.3 0 0 1 218.3 82.1" stroke="#553c33" stroke-width="1.5" opacity="0.6"/><path d="M157.5 119.2 A2.6 2.6 0 0 1 152.7 117.5" stroke="#553c33" stroke-width="1.4" opacity="0.6"/><path d="M85.9 104.6 A3.6 3.6 0 0 1 92.4 107.6" stroke="#432f28" stroke-width="1.3" opacity="0.6"/><path d="M86.6 110.6 A3.1 3.1 0 0 1 92.5 112.7" stroke="#432f28" stroke-width="1.6" opacity="0.6"/><path d="M118.8 51.0 A3.6 3.6 0 0 1 121.5 44.5" stroke="#7d5e52" stroke-width="1.0" opacity="0.6"/><path d="M94.5 63.8 A2.1 2.1 0 0 1 98.7 63.9" stroke="#3a2822" stroke-width="1.5" opacity="0.6"/><path d="M26.2 171.8 A4.2 4.2 0 0 1 18.4 174.9" stroke="#9c8076" stroke-width="1.5" opacity="0.6"/><path d="M68.4 163.2 A4.0 4.0 0 0 1 68.6 155.3" stroke="#2f211d" stroke-width="1.7" opacity="0.6"/><path d="M157.1 38.4 A3.3 3.3 0 0 1 163.6 38.8" stroke="#8c6d62" stroke-width="1.3" opacity="0.6"/><path d="M223.3 79.9 A4.1 4.1 0 0 1 230.5 76.1" stroke="#432f28" stroke-width="1.0" opacity="0.6"/><path d="M125.3 49.7 A4.0 4.0 0 0 1 124.7 57.6" stroke="#432f28" stroke-width="1.3" opacity="0.6"/><path d="M218.2 181.3 A3.4 3.4 0 0 1 224.3 184.4" stroke="#7d5e52" stroke-width="1.5" opacity="0.6"/><path d="M178.1 23.0 A3.2 3.2 0 0 1 172.4 25.6" stroke="#7d5e52" stroke-width="1.7" opacity="0.6"/><path d="M78.3 100.2 A4.5 4.5 0 0 1 83.4 92.8" stroke="#7d5e52" stroke-width="1.3" opacity="0.6"/><path d="M76.0 27.8 A3.0 3.0 0 0 1 77.2 21.9" stroke="#7d5e52" stroke-width="1.4" opacity="0.6"/><path d="M171.0 55.5 A3.4 3.4 0 0 1 165.2 58.9" stroke="#553c33" stroke-width="1.1" opacity="0.6"/><path d="M25.0 161.1 A2.6 2.6 0 0 1 28.3 165.1" stroke="#3a2822" stroke-width="1.4" opacity="0.6"/><path d="M108.5 104.8 A2.8 2.8 0 0 1 114.1 103.8" stroke="#2f211d" stroke-width="1.3" opacity="0.6"/><path d="M232.9 101.9 A4.4 4.4 0 0 1 237.1 94.2" stroke="#9c8076" stroke-width="1.3" opacity="0.6"/><path d="M99.9 219.8 A2.4 2.4 0 0 1 100.8 215.0" stroke="#432f28" stroke-width="1.1" opacity="0.6"/><path d="M64.3 123.8 A4.8 4.8 0 0 1 72.9 127.7" stroke="#8c6d62" stroke-width="0.8" opacity="0.6"/><path d="M209.6 172.6 A2.2 2.2 0 0 1 206.9 176.2" stroke="#2f211d" stroke-width="1.4" opacity="0.6"/><path d="M234.4 84.4 A3.0 3.0 0 0 1 235.0 90.4" stroke="#3a2822" stroke-width="1.1" opacity="0.6"/><path d="M171.9 162.9 A4.9 4.9 0 0 1 177.8 155.2" stroke="#2f211d" stroke-width="1.0" opacity="0.6"/><path d="M173.0 179.7 A2.9 2.9 0 0 1 172.3 185.4" stroke="#8c6d62" stroke-width="1.1" opacity="0.6"/><path d="M140.9 66.5 A2.7 2.7 0 0 1 135.9 68.6" stroke="#7d5e52" stroke-width="1.5" opacity="0.6"/><path d="M182.3 192.5 A5.0 5.0 0 0 1 183.9 202.2" stroke="#2f211d" stroke-width="0.9" opacity="0.6"/><path d="M41.9 108.2 A4.3 4.3 0 0 1 47.3 114.9" stroke="#8c6d62" stroke-width="0.8" opacity="0.6"/><path d="M112.5 114.5 A3.0 3.0 0 0 1 110.0 119.9" stroke="#8c6d62" stroke-width="1.3" opacity="0.6"/><path d="M108.2 167.1 A2.8 2.8 0 0 1 106.6 161.9" stroke="#9c8076" stroke-width="1.5" opacity="0.6"/><path d="M206.8 63.1 A3.7 3.7 0 0 1 213.6 60.5" stroke="#432f28" stroke-width="1.4" opacity="0.6"/><path d="M178.3 150.1 A4.5 4.5 0 0 1 176.7 141.4" stroke="#2f211d" stroke-width="1.0" opacity="0.6"/><path d="M156.5 75.3 A4.0 4.0 0 0 1 158.3 82.9" stroke="#3a2822" stroke-width="1.3" opacity="0.6"/><path d="M193.6 205.3 A2.8 2.8 0 0 1 196.9 209.8" stroke="#7d5e52" stroke-width="1.2" opacity="0.6"/><path d="M113.0 208.4 A5.0 5.0 0 0 1 103.2 207.4" stroke="#3a2822" stroke-width="1.0" opacity="0.6"/><path d="M215.6 61.3 A3.1 3.1 0 0 1 211.7 56.5" stroke="#553c33" stroke-width="1.8" opacity="0.6"/><path d="M96.6 26.8 A3.6 3.6 0 0 1 90.5 23.1" stroke="#8c6d62" stroke-width="1.0" opacity="0.6"/><path d="M114.5 193.0 A3.9 3.9 0 0 1 119.6 199.0" stroke="#432f28" stroke-width="1.2" opacity="0.6"/><path d="M189.3 221.3 A3.2 3.2 0 0 1 191.3 215.3" stroke="#9c8076" stroke-width="1.0" opacity="0.6"/><path d="M212.4 113.8 A4.5 4.5 0 0 1 213.6 105.0" stroke="#553c33" stroke-width="1.7" opacity="0.6"/><path d="M125.7 43.1 A3.0 3.0 0 0 1 130.7 46.2" stroke="#3a2822" stroke-width="1.1" opacity="0.6"/><path d="M78.8 103.0 A3.0 3.0 0 0 1 83.2 99.2" stroke="#3a2822" stroke-width="1.3" opacity="0.6"/><path d="M79.6 31.4 A2.2 2.2 0 0 1 76.0 28.9" stroke="#2f211d" stroke-width="1.1" opacity="0.6"/><path d="M56.3 120.4 A5.0 5.0 0 0 1 65.3 116.1" stroke="#432f28" stroke-width="1.8" opacity="0.6"/><path d="M23.6 89.8 A3.7 3.7 0 0 1 30.2 93.0" stroke="#553c33" stroke-width="0.9" opacity="0.6"/><path d="M168.7 145.7 A2.8 2.8 0 0 1 163.1 145.2" stroke="#7d5e52" stroke-width="1.7" opacity="0.6"/><path d="M122.3 187.0 A4.2 4.2 0 0 1 114.2 188.8" stroke="#432f28" stroke-width="1.7" opacity="0.6"/><path d="M138.6 158.9 A2.8 2.8 0 0 1 141.3 154.1" stroke="#3a2822" stroke-width="1.6" opacity="0.6"/><path d="M131.6 21.7 A2.6 2.6 0 0 1 136.6 23.2" stroke="#7d5e52" stroke-width="0.8" opacity="0.6"/><path d="M195.7 179.2 A4.2 4.2 0 0 1 203.6 181.9" stroke="#8c6d62" stroke-width="1.1" opacity="0.6"/><path d="M166.6 178.0 A4.3 4.3 0 0 1 167.9 186.4" stroke="#8c6d62" stroke-width="1.2" opacity="0.6"/><path d="M74.7 205.6 A2.1 2.1 0 0 1 77.0 202.2" stroke="#553c33" stroke-width="0.9" opacity="0.6"/><path d="M178.1 123.1 A2.8 2.8 0 0 1 183.6 122.1" stroke="#7d5e52" stroke-width="1.4" opacity="0.6"/><path d="M87.3 36.9 A4.0 4.0 0 0 1 92.1 30.7" stroke="#553c33" stroke-width="0.9" opacity="0.6"/><path d="M185.8 66.8 A4.2 4.2 0 0 1 184.6 58.5" stroke="#553c33" stroke-width="1.1" opacity="0.6"/><path d="M100.3 51.6 A3.1 3.1 0 0 1 94.2 50.5" stroke="#432f28" stroke-width="1.2" opacity="0.6"/><path d="M131.8 98.5 A3.0 3.0 0 0 1 130.6 104.3" stroke="#553c33" stroke-width="1.6" opacity="0.6"/><path d="M26.8 55.1 A2.2 2.2 0 0 1 22.5 54.9" stroke="#553c33" stroke-width="0.9" opacity="0.6"/><path d="M117.5 212.7 A2.7 2.7 0 0 1 113.1 215.6" stroke="#8c6d62" stroke-width="1.6" opacity="0.6"/><path d="M200.9 31.0 A3.2 3.2 0 0 1 199.1 37.0" stroke="#7d5e52" stroke-width="1.7" opacity="0.6"/><path d="M134.0 18.7 A4.2 4.2 0 0 1 138.2 25.9" stroke="#9c8076" stroke-width="1.2" opacity="0.6"/><path d="M63.0 146.6 A4.7 4.7 0 0 1 71.7 143.5" stroke="#2f211d" stroke-width="1.5" opacity="0.6"/><path d="M232.9 207.5 A2.4 2.4 0 0 1 237.6 206.7" stroke="#9c8076" stroke-width="1.5" opacity="0.6"/><path d="M164.7 103.9 A3.2 3.2 0 0 1 170.5 106.3" stroke="#432f28" stroke-width="1.2" opacity="0.6"/><path d="M26.5 203.9 A3.6 3.6 0 0 1 31.8 208.5" stroke="#8c6d62" stroke-width="1.2" opacity="0.6"/><path d="M151.9 210.6 A2.5 2.5 0 0 1 152.7 205.8" stroke="#8c6d62" stroke-width="1.1" opacity="0.6"/><path d="M160.6 55.5 A3.4 3.4 0 0 1 155.4 59.9" stroke="#553c33" stroke-width="1.2" opacity="0.6"/><path d="M51.2 218.4 A3.5 3.5 0 0 1 44.7 220.8" stroke="#432f28" stroke-width="1.0" opacity="0.6"/><path d="M197.7 48.7 A2.3 2.3 0 0 1 193.1 48.3" stroke="#3a2822" stroke-width="1.3" opacity="0.6"/><path d="M32.0 199.1 A4.1 4.1 0 0 1 37.6 193.1" stroke="#7d5e52" stroke-width="1.3" opacity="0.6"/><path d="M64.0 20.3 A3.3 3.3 0 0 1 67.4 25.9" stroke="#8c6d62" stroke-width="1.1" opacity="0.6"/><path d="M40.2 134.0 A4.4 4.4 0 0 1 33.0 129.3" stroke="#8c6d62" stroke-width="1.7" opacity="0.6"/><path d="M132.9 35.1 A4.6 4.6 0 0 1 128.6 27.0" stroke="#3a2822" stroke-width="1.6" opacity="0.6"/><path d="M101.6 42.3 A2.1 2.1 0 0 1 101.4 38.2" stroke="#7d5e52" stroke-width="1.8" opacity="0.6"/><path d="M81.2 101.5 A3.8 3.8 0 0 1 86.2 107.3" stroke="#3a2822" stroke-width="1.6" opacity="0.6"/><path d="M218.2 39.1 A5.0 5.0 0 0 1 223.3 30.6" stroke="#432f28" stroke-width="1.3" opacity="0.6"/><path d="M233.9 212.6 A3.7 3.7 0 0 1 230.2 218.9" stroke="#8c6d62" stroke-width="1.2" opacity="0.6"/><path d="M173.7 186.1 A4.8 4.8 0 0 1 175.8 195.4" stroke="#9c8076" stroke-width="1.4" opacity="0.6"/><path d="M59.4 49.9 A4.1 4.1 0 0 1 61.8 42.2" stroke="#8c6d62" stroke-width="0.8" opacity="0.6"/><path d="M81.3 89.4 A3.9 3.9 0 0 1 73.6 88.6" stroke="#7d5e52" stroke-width="1.0" opacity="0.6"/><path d="M174.5 171.7 A3.1 3.1 0 0 1 173.4 165.6" stroke="#7d5e52" stroke-width="1.6" opacity="0.6"/><path d="M32.9 74.5 A3.1 3.1 0 0 1 39.0 73.7" stroke="#553c33" stroke-width="1.2" opacity="0.6"/><path d="M129.4 210.4 A3.0 3.0 0 0 1 135.4 210.8" stroke="#9c8076" stroke-width="1.2" opacity="0.6"/><path d="M43.3 41.2 A4.6 4.6 0 0 1 47.8 49.2" stroke="#2f211d" stroke-width="0.9" opacity="0.6"/><path d="M67.6 117.3 A2.6 2.6 0 0 1 72.7 116.3" stroke="#8c6d62" stroke-width="1.4" opacity="0.6"/><path d="M33.9 107.5 A2.8 2.8 0 0 1 35.3 102.0" stroke="#8c6d62" stroke-width="1.5" opacity="0.6"/><path d="M169.5 25.4 A3.8 3.8 0 0 1 165.1 19.2" stroke="#3a2822" stroke-width="1.2" opacity="0.6"/><path d="M221.1 68.6 A3.3 3.3 0 0 1 215.9 72.4" stroke="#7d5e52" stroke-width="0.9" opacity="0.6"/><path d="M194.1 43.2 A4.0 4.0 0 0 1 188.0 38.2" stroke="#8c6d62" stroke-width="1.7" opacity="0.6"/><path d="M104.9 95.4 A4.2 4.2 0 0 1 96.6 94.9" stroke="#9c8076" stroke-width="1.5" opacity="0.6"/><path d="M198.5 199.4 A4.0 4.0 0 0 1 204.4 194.1" stroke="#432f28" stroke-width="1.3" opacity="0.6"/><path d="M123.9 87.8 A4.0 4.0 0 0 1 123.5 79.8" stroke="#553c33" stroke-width="0.9" opacity="0.6"/><path d="M23.7 176.4 A3.3 3.3 0 0 1 24.8 182.9" stroke="#432f28" stroke-width="1.4" opacity="0.6"/><path d="M244.6 32.0 A3.4 3.4 0 0 1 238.1 34.0" stroke="#8c6d62" stroke-width="1.6" opacity="0.6"/><path d="M132.2 140.2 A3.5 3.5 0 0 1 138.2 136.7" stroke="#2f211d" stroke-width="0.9" opacity="0.6"/><path d="M185.2 34.4 A2.5 2.5 0 0 1 183.5 39.1" stroke="#9c8076" stroke-width="1.5" opacity="0.6"/><path d="M224.7 157.4 A4.9 4.9 0 0 1 218.5 149.8" stroke="#8c6d62" stroke-width="1.6" opacity="0.6"/><path d="M128.6 23.9 A4.6 4.6 0 0 1 119.8 21.4" stroke="#2f211d" stroke-width="1.7" opacity="0.6"/><path d="M100.9 130.3 A3.6 3.6 0 0 1 95.6 125.5" stroke="#3a2822" stroke-width="1.6" opacity="0.6"/><path d="M243.6 135.1 A2.2 2.2 0 0 1 240.2 132.3" stroke="#432f28" stroke-width="0.9" opacity="0.6"/><path d="M129.5 80.3 A4.3 4.3 0 0 1 138.0 79.6" stroke="#432f28" stroke-width="1.4" opacity="0.6"/><path d="M241.2 136.9 A2.5 2.5 0 0 1 237.8 140.5" stroke="#3a2822" stroke-width="1.3" opacity="0.6"/><path d="M41.1 193.1 A2.5 2.5 0 0 1 45.5 190.9" stroke="#553c33" stroke-width="1.3" opacity="0.6"/><path d="M156.6 199.3 A4.9 4.9 0 0 1 156.5 189.6" stroke="#8c6d62" stroke-width="1.6" opacity="0.6"/><path d="M192.8 41.3 A4.2 4.2 0 0 1 200.8 44.0" stroke="#8c6d62" stroke-width="1.0" opacity="0.6"/><path d="M28.0 39.9 A2.9 2.9 0 0 1 24.1 44.1" stroke="#553c33" stroke-width="1.4" opacity="0.6"/><path d="M29.0 102.2 A2.2 2.2 0 0 1 30.9 106.2" stroke="#7d5e52" stroke-width="1.3" opacity="0.6"/><path d="M110.7 199.8 A2.6 2.6 0 0 1 115.1 202.6" stroke="#553c33" stroke-width="1.7" opacity="0.6"/><path d="M128.6 200.7 A3.2 3.2 0 0 1 133.2 205.0" stroke="#7d5e52" stroke-width="1.1" opacity="0.6"/><path d="M64.9 38.9 A4.4 4.4 0 0 1 73.2 36.3" stroke="#8c6d62" stroke-width="1.2" opacity="0.6"/><path d="M116.8 33.1 A4.5 4.5 0 0 1 124.1 27.9" stroke="#3a2822" stroke-width="1.0" opacity="0.6"/><path d="M90.1 189.1 A4.0 4.0 0 0 1 94.1 182.2" stroke="#9c8076" stroke-width="1.2" opacity="0.6"/><path d="M124.5 69.6 A4.2 4.2 0 0 1 131.1 64.3" stroke="#8c6d62" stroke-width="1.5" opacity="0.6"/><path d="M149.0 44.2 A4.1 4.1 0 0 1 155.1 38.9" stroke="#7d5e52" stroke-width="1.8" opacity="0.6"/><path d="M155.5 95.5 A2.9 2.9 0 0 1 150.4 92.9" stroke="#553c33" stroke-width="1.6" opacity="0.6"/><path d="M64.4 46.2 A4.3 4.3 0 0 1 57.9 40.6" stroke="#7d5e52" stroke-width="0.9" opacity="0.6"/><path d="M72.9 77.7 A4.4 4.4 0 0 1 79.7 72.3" stroke="#8c6d62" stroke-width="1.4" opacity="0.6"/><path d="M41.0 133.6 A2.3 2.3 0 0 1 38.3 137.2" stroke="#8c6d62" stroke-width="1.8" opacity="0.6"/><path d="M92.0 88.5 A4.5 4.5 0 0 1 94.8 80.1" stroke="#2f211d" stroke-width="1.1" opacity="0.6"/><path d="M244.8 117.6 A3.2 3.2 0 0 1 238.8 119.7" stroke="#3a2822" stroke-width="1.4" opacity="0.6"/><path d="M157.2 23.1 A4.8 4.8 0 0 1 165.9 27.0" stroke="#2f211d" stroke-width="1.0" opacity="0.6"/><path d="M205.5 115.3 A3.0 3.0 0 0 1 200.0 117.6" stroke="#9c8076" stroke-width="1.8" opacity="0.6"/><path d="M36.8 174.5 A3.3 3.3 0 0 1 35.7 181.0" stroke="#2f211d" stroke-width="0.9" opacity="0.6"/><path d="M172.0 179.0 A3.3 3.3 0 0 1 168.0 184.2" stroke="#9c8076" stroke-width="1.5" opacity="0.6"/><path d="M235.7 94.9 A4.5 4.5 0 0 1 229.9 88.1" stroke="#9c8076" stroke-width="0.9" opacity="0.6"/><path d="M85.7 214.6 A3.7 3.7 0 0 1 92.4 211.7" stroke="#2f211d" stroke-width="1.0" opacity="0.6"/><path d="M137.1 190.8 A2.4 2.4 0 0 1 141.3 188.8" stroke="#2f211d" stroke-width="1.1" opacity="0.6"/><path d="M216.4 208.1 A2.6 2.6 0 0 1 221.6 208.5" stroke="#9c8076" stroke-width="1.7" opacity="0.6"/><path d="M175.7 94.9 A4.3 4.3 0 0 1 169.6 101.0" stroke="#3a2822" stroke-width="1.3" opacity="0.6"/><path d="M190.4 87.1 A2.0 2.0 0 0 1 193.2 84.2" stroke="#2f211d" stroke-width="1.0" opacity="0.6"/><path d="M148.2 125.8 A3.2 3.2 0 0 1 154.5 125.1" stroke="#553c33" stroke-width="1.4" opacity="0.6"/><path d="M189.8 46.0 A4.1 4.1 0 0 1 191.4 54.0" stroke="#8c6d62" stroke-width="1.1" opacity="0.6"/><path d="M75.5 70.8 A4.2 4.2 0 0 1 67.8 73.8" stroke="#553c33" stroke-width="0.8" opacity="0.6"/><path d="M196.2 69.6 A2.7 2.7 0 0 1 199.7 73.8" stroke="#432f28" stroke-width="1.2" opacity="0.6"/><path d="M147.7 220.3 A4.7 4.7 0 0 1 141.6 213.1" stroke="#8c6d62" stroke-width="1.2" opacity="0.6"/><path d="M65.3 146.1 A4.0 4.0 0 0 1 57.8 143.4" stroke="#553c33" stroke-width="1.6" opacity="0.6"/><path d="M171.6 136.0 A3.7 3.7 0 0 1 178.7 134.5" stroke="#7d5e52" stroke-width="1.3" opacity="0.6"/><path d="M236.1 94.9 A2.9 2.9 0 0 1 235.7 89.2" stroke="#432f28" stroke-width="1.6" opacity="0.6"/><path d="M65.6 131.6 A3.8 3.8 0 0 1 63.8 124.3" stroke="#3a2822" stroke-width="1.0" opacity="0.6"/><path d="M60.3 220.3 A3.1 3.1 0 0 1 54.3 221.4" stroke="#7d5e52" stroke-width="1.2" opacity="0.6"/><path d="M183.0 81.7 A4.6 4.6 0 0 1 176.9 75.0" stroke="#9c8076" stroke-width="1.8" opacity="0.6"/><path d="M99.4 59.5 A4.7 4.7 0 0 1 100.7 50.4" stroke="#9c8076" stroke-width="1.1" opacity="0.6"/><path d="M51.8 117.0 A2.8 2.8 0 0 1 46.4 118.2" stroke="#7d5e52" stroke-width="1.6" opacity="0.6"/><path d="M50.3 95.9 A4.5 4.5 0 0 1 56.4 102.3" stroke="#553c33" stroke-width="1.7" opacity="0.6"/><path d="M137.7 166.3 A3.6 3.6 0 0 1 143.2 170.9" stroke="#9c8076" stroke-width="1.5" opacity="0.6"/><path d="M162.5 78.7 A3.3 3.3 0 0 1 160.2 84.8" stroke="#2f211d" stroke-width="1.2" opacity="0.6"/><path d="M69.8 109.1 A3.1 3.1 0 0 1 73.1 114.3" stroke="#9c8076" stroke-width="1.0" opacity="0.6"/><path d="M83.7 169.8 A4.7 4.7 0 0 1 77.4 163.0" stroke="#3a2822" stroke-width="1.7" opacity="0.6"/><path d="M226.8 151.9 A2.2 2.2 0 0 1 230.5 154.1" stroke="#3a2822" stroke-width="0.9" opacity="0.6"/><path d="M49.4 218.8 A2.9 2.9 0 0 1 43.7 219.9" stroke="#2f211d" stroke-width="0.9" opacity="0.6"/><path d="M166.3 45.5 A3.2 3.2 0 0 1 168.1 51.6" stroke="#432f28" stroke-width="1.8" opacity="0.6"/><path d="M208.3 175.3 A3.6 3.6 0 0 1 210.5 182.0" stroke="#3a2822" stroke-width="1.2" opacity="0.6"/><path d="M42.2 162.6 A3.8 3.8 0 0 1 36.7 157.3" stroke="#432f28" stroke-width="1.7" opacity="0.6"/><path d="M55.0 58.3 A4.1 4.1 0 0 1 46.9 58.6" stroke="#3a2822" stroke-width="1.4" opacity="0.6"/><path d="M144.2 50.1 A2.9 2.9 0 0 1 145.8 44.6" stroke="#7d5e52" stroke-width="1.0" opacity="0.6"/><path d="M57.8 127.5 A4.6 4.6 0 0 1 49.0 130.0" stroke="#432f28" stroke-width="1.7" opacity="0.6"/><path d="M27.5 116.7 A3.8 3.8 0 0 1 21.0 120.3" stroke="#9c8076" stroke-width="1.4" opacity="0.6"/><path d="M94.4 55.1 A4.3 4.3 0 0 1 86.3 52.3" stroke="#432f28" stroke-width="1.8" opacity="0.6"/><path d="M47.7 199.5 A4.9 4.9 0 0 1 43.0 191.0" stroke="#3a2822" stroke-width="1.2" opacity="0.6"/><path d="M63.0 137.9 A4.5 4.5 0 0 1 58.7 145.8" stroke="#2f211d" stroke-width="1.6" opacity="0.6"/><path d="M16.5 36.1 A4.4 4.4 0 0 1 24.3 32.3" stroke="#8c6d62" stroke-width="1.6" opacity="0.6"/><path d="M96.4 90.6 A2.0 2.0 0 0 1 92.8 89.0" stroke="#2f211d" stroke-width="1.0" opacity="0.6"/><path d="M102.4 169.6 A3.6 3.6 0 0 1 102.6 162.5" stroke="#7d5e52" stroke-width="1.3" opacity="0.6"/><path d="M216.2 57.9 A2.4 2.4 0 0 1 216.0 53.0" stroke="#7d5e52" stroke-width="1.3" opacity="0.6"/><path d="M220.0 56.8 A4.0 4.0 0 0 1 227.7 58.9" stroke="#553c33" stroke-width="1.1" opacity="0.6"/><path d="M74.0 197.0 A2.6 2.6 0 0 1 79.0 198.0" stroke="#432f28" stroke-width="0.9" opacity="0.6"/><path d="M186.0 62.3 A2.1 2.1 0 0 1 182.6 59.8" stroke="#432f28" stroke-width="1.3" opacity="0.6"/><path d="M191.2 71.4 A2.7 2.7 0 0 1 188.3 67.0" stroke="#8c6d62" stroke-width="1.4" opacity="0.6"/><path d="M170.1 35.8 A2.2 2.2 0 0 1 167.7 32.1" stroke="#2f211d" stroke-width="1.2" opacity="0.6"/><path d="M197.8 176.4 A3.0 3.0 0 0 1 192.4 179.0" stroke="#2f211d" stroke-width="1.0" opacity="0.6"/><path d="M146.9 211.4 A2.2 2.2 0 0 1 143.0 209.5" stroke="#2f211d" stroke-width="1.7" opacity="0.6"/><path d="M28.2 215.9 A3.3 3.3 0 0 1 27.2 209.5" stroke="#432f28" stroke-width="0.9" opacity="0.6"/><path d="M218.1 217.6 A4.8 4.8 0 0 1 212.8 209.7" stroke="#7d5e52" stroke-width="0.9" opacity="0.6"/><path d="M197.5 82.6 A2.1 2.1 0 0 1 198.8 86.6" stroke="#432f28" stroke-width="0.9" opacity="0.6"/><path d="M215.2 162.0 A4.8 4.8 0 0 1 215.4 171.6" stroke="#8c6d62" stroke-width="1.2" opacity="0.6"/><path d="M223.0 45.5 A4.6 4.6 0 0 1 226.0 54.1" stroke="#432f28" stroke-width="1.5" opacity="0.6"/><path d="M43.7 84.0 A3.7 3.7 0 0 1 50.6 86.7" stroke="#7d5e52" stroke-width="1.3" opacity="0.6"/><path d="M146.6 177.5 A3.6 3.6 0 0 1 146.3 170.4" stroke="#3a2822" stroke-width="0.9" opacity="0.6"/><path d="M39.3 86.1 A4.3 4.3 0 0 1 35.7 78.4" stroke="#9c8076" stroke-width="1.3" opacity="0.6"/><path d="M91.0 133.2 A2.9 2.9 0 0 1 95.2 137.0" stroke="#2f211d" stroke-width="1.7" opacity="0.6"/><path d="M101.0 220.3 A3.5 3.5 0 0 1 94.3 221.8" stroke="#3a2822" stroke-width="1.0" opacity="0.6"/><path d="M236.2 29.1 A4.3 4.3 0 0 1 239.0 21.1" stroke="#8c6d62" stroke-width="1.3" opacity="0.6"/><path d="M26.1 103.1 A4.5 4.5 0 0 1 34.5 100.1" stroke="#3a2822" stroke-width="0.8" opacity="0.6"/><path d="M235.6 143.9 A2.2 2.2 0 0 1 231.4 142.9" stroke="#3a2822" stroke-width="1.0" opacity="0.6"/><path d="M86.5 25.8 A2.8 2.8 0 0 1 87.9 31.1" stroke="#553c33" stroke-width="1.4" opacity="0.6"/><path d="M73.5 168.8 A2.5 2.5 0 0 1 77.5 171.8" stroke="#432f28" stroke-width="1.7" opacity="0.6"/><path d="M109.2 129.3 A3.4 3.4 0 0 1 115.9 129.8" stroke="#7d5e52" stroke-width="1.7" opacity="0.6"/><path d="M165.8 145.4 A4.7 4.7 0 0 1 174.9 147.1" stroke="#9c8076" stroke-width="1.0" opacity="0.6"/><path d="M236.2 77.5 A2.5 2.5 0 0 1 240.6 79.7" stroke="#9c8076" stroke-width="1.1" opacity="0.6"/><path d="M48.9 172.3 A3.6 3.6 0 0 1 42.4 175.3" stroke="#d8cac6" stroke-width="1.3" opacity="0.55"/><path d="M34.1 203.0 A2.9 2.9 0 0 1 28.8 205.5" stroke="#d8cac6" stroke-width="1.3" opacity="0.55"/><path d="M33.2 204.8 A2.9 2.9 0 0 1 32.6 199.0" stroke="#d8cac6" stroke-width="1.2" opacity="0.55"/><path d="M28.8 170.9 A2.4 2.4 0 0 1 29.3 166.1" stroke="#d8cac6" stroke-width="1.4" opacity="0.55"/><path d="M35.7 190.9 A3.6 3.6 0 0 1 30.7 185.7" stroke="#d8cac6" stroke-width="1.2" opacity="0.55"/><path d="M27.6 126.5 A3.7 3.7 0 0 1 25.2 119.5" stroke="#d8cac6" stroke-width="1.0" opacity="0.55"/><path d="M52.7 209.6 A2.6 2.6 0 0 1 47.8 211.2" stroke="#d8cac6" stroke-width="1.2" opacity="0.55"/><path d="M32.5 175.5 A3.9 3.9 0 0 1 35.9 182.5" stroke="#d8cac6" stroke-width="1.5" opacity="0.55"/><path d="M38.5 203.5 A2.7 2.7 0 0 1 35.4 199.0" stroke="#d8cac6" stroke-width="0.9" opacity="0.55"/><path d="M36.2 116.7 A3.2 3.2 0 0 1 29.8 117.0" stroke="#d8cac6" stroke-width="1.3" opacity="0.55"/><path d="M30.9 144.9 A3.6 3.6 0 0 1 38.1 143.5" stroke="#d8cac6" stroke-width="1.0" opacity="0.55"/><path d="M46.0 158.7 A2.1 2.1 0 0 1 41.9 159.7" stroke="#d8cac6" stroke-width="0.8" opacity="0.55"/><path d="M48.9 184.5 A2.0 2.0 0 0 1 48.2 188.5" stroke="#d8cac6" stroke-width="1.1" opacity="0.55"/><path d="M30.0 170.9 A2.1 2.1 0 0 1 28.0 167.3" stroke="#d8cac6" stroke-width="1.5" opacity="0.55"/><path d="M47.2 128.7 A3.9 3.9 0 0 1 40.3 131.9" stroke="#d8cac6" stroke-width="1.0" opacity="0.55"/><path d="M42.1 148.4 A3.6 3.6 0 0 1 36.3 144.4" stroke="#d8cac6" stroke-width="1.3" opacity="0.55"/><path d="M50.9 190.6 A2.1 2.1 0 0 1 47.1 192.3" stroke="#d8cac6" stroke-width="0.9" opacity="0.55"/><path d="M39.1 148.0 A3.8 3.8 0 0 1 42.7 141.3" stroke="#d8cac6" stroke-width="1.4" opacity="0.55"/><path d="M36.8 168.0 A2.6 2.6 0 0 1 34.2 163.4" stroke="#d8cac6" stroke-width="0.9" opacity="0.55"/><path d="M44.0 128.6 A4.0 4.0 0 0 1 39.4 122.1" stroke="#d8cac6" stroke-width="0.8" opacity="0.55"/><path d="M43.0 213.4 A2.8 2.8 0 0 1 42.2 207.9" stroke="#d8cac6" stroke-width="1.2" opacity="0.55"/><path d="M42.9 195.3 A2.8 2.8 0 0 1 37.5 193.7" stroke="#d8cac6" stroke-width="1.4" opacity="0.55"/><path d="M39.5 116.0 A3.7 3.7 0 0 1 34.2 111.0" stroke="#d8cac6" stroke-width="1.3" opacity="0.55"/><path d="M47.5 209.1 A3.6 3.6 0 0 1 41.6 205.1" stroke="#d8cac6" stroke-width="1.1" opacity="0.55"/><path d="M42.9 126.0 A2.6 2.6 0 0 1 47.7 124.1" stroke="#d8cac6" stroke-width="1.5" opacity="0.55"/><path d="M48.9 197.2 A2.9 2.9 0 0 1 54.7 196.3" stroke="#d8cac6" stroke-width="1.3" opacity="0.55"/><path d="M36.5 161.1 A2.8 2.8 0 0 1 32.8 156.9" stroke="#d8cac6" stroke-width="1.1" opacity="0.55"/><path d="M48.9 210.8 A3.3 3.3 0 0 1 55.4 210.3" stroke="#d8cac6" stroke-width="1.0" opacity="0.55"/><path d="M34.8 116.4 A3.6 3.6 0 0 1 30.5 122.0" stroke="#d8cac6" stroke-width="1.1" opacity="0.55"/><path d="M45.3 187.3 A3.4 3.4 0 0 1 49.2 192.8" stroke="#d8cac6" stroke-width="1.3" opacity="0.55"/><path d="M40.8 147.3 A2.6 2.6 0 0 1 45.8 146.5" stroke="#d8cac6" stroke-width="1.3" opacity="0.55"/><path d="M33.7 177.3 A3.9 3.9 0 0 1 38.7 183.3" stroke="#d8cac6" stroke-width="1.2" opacity="0.55"/><path d="M36.9 109.0 A2.5 2.5 0 0 1 39.6 113.2" stroke="#d8cac6" stroke-width="1.1" opacity="0.55"/><path d="M42.3 196.2 A3.6 3.6 0 0 1 46.0 190.1" stroke="#d8cac6" stroke-width="1.3" opacity="0.55"/><path d="M49.5 183.0 A2.7 2.7 0 0 1 46.8 187.7" stroke="#d8cac6" stroke-width="1.4" opacity="0.55"/></g>
      <path fill="url(#skin)" d="M86.9 118.0 C86.4 112.1 87.1 108.5 87.6 103.0 C88.1 97.5 88.4 90.2 89.8 84.7 C91.2 79.2 92.9 74.8 95.7 70.0 C98.5 65.2 101.9 59.8 106.8 56.0 C111.7 52.2 119.1 48.0 125.0 47.0 C130.9 46.0 136.7 48.0 142.0 50.0 C147.3 52.0 153.1 55.1 156.8 59.0 C160.5 62.9 162.2 68.7 164.2 73.6 C166.2 78.5 167.6 83.5 168.6 88.4 C169.6 93.3 170.1 97.7 170.0 103.0 C169.9 108.3 169.4 113.5 167.9 120.0 C166.4 126.5 162.8 135.2 161.2 142.0 C159.6 148.8 158.9 155.6 158.3 160.5 C157.7 165.4 157.1 167.2 157.6 171.5 C158.1 175.8 158.9 182.2 161.2 186.3 C163.5 190.4 167.6 192.1 171.5 195.8 C175.4 199.5 181.1 204.9 184.8 208.4 C188.6 211.9 189.0 212.6 194.0 217.0 C199.0 221.4 214.0 227.8 215.0 235.0 C216.0 242.2 229.2 255.8 200.0 260.0 C170.8 264.2 64.8 267.4 40.0 260.0 C15.2 252.6 48.3 222.5 51.5 215.7 C54.7 208.9 55.3 219.1 59.0 219.0 C62.7 218.9 69.9 216.4 73.6 215.0 C77.3 213.6 77.3 212.1 81.0 210.6 C84.7 209.1 92.0 208.2 95.7 206.0 C99.4 203.8 101.8 200.6 103.0 197.3 C104.2 194.0 103.1 192.5 103.0 186.0 C102.9 179.5 103.6 164.6 102.4 158.3 C101.2 152.0 97.7 151.3 95.7 148.0 C93.7 144.7 92.1 143.4 90.6 138.4 C89.1 133.4 87.4 123.9 86.9 118.0 Z"/>
      <path fill="#d9ae97" opacity="0.75" filter="url(#blur2)" d="M101 152 C112 161 140 163 158 150 L158 176 C140 181 112 180 102 172 Z"/>
      <path fill="#f3ddd0" opacity="0.6" filter="url(#blur2)" d="M100 60 C115 52 140 52 155 62 C150 75 110 75 100 60 Z"/>
      <path fill="#2a2226" d="M59 217 L70 215.7 L73.6 218.7 L68.5 226.8 L59 221.6 Z"/>
      <path fill="none" stroke="#2a2428" stroke-width="3" d="M186 210.6 C176 210.8 166 213 156 218 C149 222 143 230 139 240"/>
    </g>
    <g filter="url(#blur1)">
      <path fill="none" stroke="#5e4439" stroke-width="4" stroke-linecap="round" d="M95 85 C98 82 103 80.6 108 81 C112 81.5 115 82.8 117 84"/>
      <path fill="none" stroke="#5e4439" stroke-width="4" stroke-linecap="round" d="M136 86.2 C140 84.5 145 83.8 150 84.8 C155 86 159 88.5 161.5 91"/>
      <ellipse cx="106.8" cy="95.3" rx="7.5" ry="3.4" fill="#d9b4a6"/>
      <circle cx="107.5" cy="95.3" r="3.2" fill="#6a4433"/>
      <path fill="none" stroke="#5a3d35" stroke-width="1.6" d="M98.5 96 C102 91.8 111 91.5 115.5 95"/>
      <ellipse cx="145.8" cy="98" rx="7.5" ry="3.4" fill="#d9b4a6"/>
      <circle cx="145.5" cy="98" r="3.2" fill="#6a4433"/>
      <path fill="none" stroke="#5a3d35" stroke-width="1.6" d="M137.5 98.5 C141 94.5 150 94 154.5 97.5"/>
      <path fill="none" stroke="#f5e1d6" stroke-width="3" opacity="0.7" d="M124 96 C123 104 122 110 121.5 114"/>
      <path fill="#b98672" d="M116 117 C119 121 122 121.5 125 120 C128 121.5 131 121 133 117.5 C131 120 127 123 124 122.5 C121 123 118 121 116 117 Z"/>
      <path fill="#cf8e90" d="M103 129.6 C110 131 124 132 137.7 135.5 C131 140.5 117 141.5 110 137.5 C107 135 105 132 103 129.6 Z"/>
      <path fill="none" stroke="#9f6666" stroke-width="1.2" d="M103 129.6 C114 133.5 127 134.5 137.7 135.5"/>
    </g>
  </g>
  <circle cx="121.6" cy="120.9" r="120" fill="none" stroke="#f6f6f6" stroke-width="0.6"/>
</svg>
<div class="a pill"></div>
<div class="a tabline"></div>
<div class="a tabul"></div>
<svg class="a" style="left:0;top:500px" width="700" height="300" viewBox="0 500 700 300">
  <circle cx="204" cy="639.5" r="85" fill="none" stroke="#ececec" stroke-width="18.5"/>
  <circle cx="444" cy="639.5" r="85" fill="none" stroke="#ececec" stroke-width="18.5"/>
  <circle cx="204" cy="639.5" r="85" fill="none" stroke="#63ac72" stroke-width="18.5" stroke-linecap="round" stroke-dasharray="437.94 534.07" transform="rotate(90 204 639.5)"/>
  <circle cx="444" cy="639.5" r="85" fill="none" stroke="#63ac72" stroke-width="18.5" stroke-linecap="round" stroke-dasharray="309.76 534.07" transform="rotate(90 444 639.5)"/>
</svg>
<div class="a btn"></div>
<div class="a card" style="left:104px;top:1015px;width:900px;height:286px"></div>
<div class="a cdiv" style="left:105px;top:1135px;width:898px"></div>
<div class="a card" style="left:1044px;top:1015px;width:900px;height:184px"></div>
<div class="a cdiv" style="left:1045px;top:1135px;width:898px"></div>
<div class="a card" style="left:104px;top:1341px;width:900px;height:354px"></div>
<div class="a cdiv" style="left:105px;top:1461px;width:898px"></div>
<div class="a card" style="left:1044px;top:1341px;width:900px;height:184px"></div>
<div class="a cdiv" style="left:1045px;top:1461px;width:898px"></div>
<svg class="a" style="left:690px;top:55px" width="200" height="55" viewBox="690 55 200 55" fill="none" stroke="#4d4d5b" stroke-width="2" stroke-linecap="round">
  <circle cx="708.6" cy="69.2" r="2.1"/>
  <path d="M703.4 79 A5.4 5.4 0 0 1 713.8 79"/>
  <rect x="718.2" y="69.2" width="23" height="7.8" rx="2.4"/>
  <path d="M733.6 69.4 V77"/>
  <circle cx="708.6" cy="87" r="2.1"/>
  <path d="M703.4 96.8 A5.4 5.4 0 0 1 713.8 96.8"/>
  <rect x="718.2" y="87" width="23" height="7.8" rx="2.4"/>
  <path d="M725.6 87.2 V94.8"/>
  <rect x="771" y="68.9" width="33.8" height="26" rx="3.6"/>
  <circle cx="782" cy="78.2" r="3.2"/>
  <path d="M776.2 89.4 A6.2 6.2 0 0 1 788.2 89.4"/>
  <path d="M791.2 77 H800.8 M791.2 80.9 H800.8 M791.2 84.9 H800.8" stroke-linecap="butt"/>
  <circle cx="853.5" cy="71.9" r="2.8" stroke-width="1.9"/>
  <circle cx="853.5" cy="81.9" r="2.8" stroke-width="1.9"/>
  <circle cx="853.5" cy="91.9" r="2.8" stroke-width="1.9"/>
</svg>
<svg class="a" style="left:320px;top:195px" width="40" height="30" viewBox="320 195 40 30" stroke="#58b47f" stroke-width="2.3" stroke-linecap="round">
  <path d="M334 209.4 H350.4 M342.2 201.2 V217.6"/>
</svg>
<svg class="a" style="left:1905px;top:388px" width="30" height="25" viewBox="1905 388 30 25" fill="none" stroke="#6c7192" stroke-width="1.5">
  <path d="M1914.5 396.5 L1920 402.2 L1925.5 396.5"/>
</svg>

<div class="a t" id="name" style="top:48.80px;font-size:58px;color:#575766;font-weight:400;letter-spacing:1.790px;-webkit-text-stroke:0.8px #575766;left:315.20px;">Merve Demir</div>
<div class="a t" id="email" style="top:143.20px;font-size:28px;color:#575766;font-weight:400;letter-spacing:1.060px;left:313.80px;">murat+demir@flowq.com</div>
<div class="a t" id="etiket" style="top:199.22px;font-size:21px;color:#58b47f;font-weight:400;letter-spacing:0.320px;left:356.30px;">Etiket</div>
<div class="a t" id="t1" style="top:385.79px;font-size:26px;color:#63688d;font-weight:400;letter-spacing:-0.773px;left:68.50px;">ADAY GEÇMİŞİ</div>
<div class="a t" id="t2" style="top:385.79px;font-size:26px;color:#506ad9;font-weight:400;letter-spacing:-0.933px;left:423.10px;">PUANLAR</div>
<div class="a t" id="t3" style="top:385.79px;font-size:26px;color:#63688d;font-weight:400;letter-spacing:-0.644px;left:717.70px;">TAHMİN VE ÖNGÖRÜLER</div>
<div class="a t" id="t4" style="top:385.79px;font-size:26px;color:#63688d;font-weight:400;letter-spacing:-1.029px;left:1197.30px;">ÖZGEÇMİŞ</div>
<div class="a t" id="t5" style="top:385.79px;font-size:26px;color:#63688d;font-weight:400;letter-spacing:-0.929px;left:1505.50px;">YORUMLAR</div>
<div class="a t" id="t6" style="top:385.79px;font-size:26px;color:#63688d;font-weight:400;letter-spacing:-1.500px;left:1825.20px;">DİĞER</div>
<div class="a t" id="g82" style="top:604.83px;font-size:66px;color:#5fae73;font-weight:400;letter-spacing:0.900px;left:167.10px;">82</div>
<div class="a t" id="g58" style="top:604.83px;font-size:66px;color:#5fae73;font-weight:400;letter-spacing:-0.100px;left:408.10px;">58</div>
<div class="a t" id="l1a" style="top:745.90px;font-size:30px;color:#555566;font-weight:400;letter-spacing:0.414px;left:93.90px;">Genel Yetenek -</div>
<div class="a t" id="l1b" style="top:786.00px;font-size:30px;color:#555566;font-weight:400;letter-spacing:-0.050px;left:156.10px;">Level 3</div>
<div class="a t" id="l2a" style="top:745.90px;font-size:30px;color:#555566;font-weight:400;letter-spacing:0.290px;left:378.70px;">İngilizce -</div>
<div class="a t" id="l2b" style="top:786.00px;font-size:30px;color:#555566;font-weight:400;letter-spacing:-1.036px;left:338.90px;">INTERMEDIATE</div>
<div class="a t" id="btn" style="top:911.14px;font-size:27px;color:#ffffff;font-weight:400;letter-spacing:-0.368px;left:766.30px;">Yüksek Puanlar (&gt;75)</div>
<div class="a t" id="tum" style="top:911.14px;font-size:27px;color:#63688d;font-weight:400;letter-spacing:0.110px;left:1125.10px;">Tüm Puanlar</div>
<div class="a t" id="c1" style="top:1061.21px;font-size:32px;color:#464659;font-weight:400;letter-spacing:-0.430px;left:135.50px;">Genel Yetenek (Seviye 3) 82%</div>
<div class="a t" id="c2" style="top:1061.21px;font-size:32px;color:#464659;font-weight:400;letter-spacing:-0.026px;left:1075.90px;">İmaj Zedeleyiciler 13.1%</div>
<div class="a t" id="c3" style="top:1386.71px;font-size:32px;color:#464659;font-weight:400;letter-spacing:0.005px;left:135.90px;">İlişki ve Diplomasi 86%</div>
<div class="a t" id="c4" style="top:1386.71px;font-size:32px;color:#464659;font-weight:400;letter-spacing:-0.083px;left:1075.50px;">Engelleyici Korkular 33%</div>
<div class="a t" id="rl0" style="top:1169.58px;font-size:24px;color:#555566;font-weight:400;letter-spacing:0.569px;left:135.50px;">Eleştirel Düşünme</div>
<div class="a t" id="rp0" style="top:1169.58px;font-size:24px;color:#555566;font-weight:700;letter-spacing:0.000px;left:293px;width:200px;text-align:right;">96%</div>
<div class="a t" id="rl1" style="top:1203.58px;font-size:24px;color:#555566;font-weight:400;letter-spacing:0.542px;left:135.50px;">Problem Çözme</div>
<div class="a t" id="rp1" style="top:1203.58px;font-size:24px;color:#555566;font-weight:700;letter-spacing:0.000px;left:293px;width:200px;text-align:right;">75%</div>
<div class="a t" id="rl2" style="top:1237.58px;font-size:24px;color:#555566;font-weight:400;letter-spacing:0.908px;left:135.50px;">Mantık Yürütme</div>
<div class="a t" id="rp2" style="top:1237.58px;font-size:24px;color:#555566;font-weight:700;letter-spacing:0.000px;left:293px;width:200px;text-align:right;">75%</div>
<div class="a t" id="sl0" style="top:1495.58px;font-size:24px;color:#555566;font-weight:400;letter-spacing:0.760px;left:135.90px;">Empati</div>
<div class="a t" id="sp0" style="top:1495.58px;font-size:24px;color:#555566;font-weight:700;letter-spacing:0.000px;left:293px;width:200px;text-align:right;">94%</div>
<div class="a t" id="sl1" style="top:1529.58px;font-size:24px;color:#555566;font-weight:400;letter-spacing:0.600px;left:135.50px;">İş birliği</div>
<div class="a t" id="sp1" style="top:1529.58px;font-size:24px;color:#555566;font-weight:700;letter-spacing:0.000px;left:293px;width:200px;text-align:right;">96%</div>
<div class="a t" id="sl2" style="top:1563.58px;font-size:24px;color:#555566;font-weight:400;letter-spacing:0.680px;left:135.90px;">Affedicilik</div>
<div class="a t" id="sp2" style="top:1563.58px;font-size:24px;color:#555566;font-weight:700;letter-spacing:0.000px;left:293px;width:200px;text-align:right;">80%</div>
<div class="a t" id="sl3" style="top:1597.58px;font-size:24px;color:#555566;font-weight:400;letter-spacing:0.575px;left:135.90px;">Kavramsal Düşünme</div>
<div class="a t" id="sp3" style="top:1597.58px;font-size:24px;color:#555566;font-weight:700;letter-spacing:0.000px;left:293px;width:200px;text-align:right;">83%</div>
<div class="a t" id="sl4" style="top:1631.58px;font-size:24px;color:#555566;font-weight:400;letter-spacing:0.569px;left:135.70px;">Yardımseverlik</div>
<div class="a t" id="sp4" style="top:1631.58px;font-size:24px;color:#555566;font-weight:700;letter-spacing:0.000px;left:293px;width:200px;text-align:right;">90%</div>
<div class="a bar" style="left:500px;top:1167px"><i style="width:96%"></i></div>
<div class="a bar" style="left:500px;top:1201px"><i style="width:75%"></i></div>
<div class="a bar" style="left:500px;top:1235px"><i style="width:75%"></i></div>
<div class="a bar" style="left:500px;top:1493px"><i style="width:94%"></i></div>
<div class="a bar" style="left:500px;top:1527px"><i style="width:96%"></i></div>
<div class="a bar" style="left:500px;top:1561px"><i style="width:80%"></i></div>
<div class="a bar" style="left:500px;top:1595px"><i style="width:83%"></i></div>
<div class="a bar" style="left:500px;top:1629px"><i style="width:90%"></i></div>
<div class="a shade"></div>
</body></html>
